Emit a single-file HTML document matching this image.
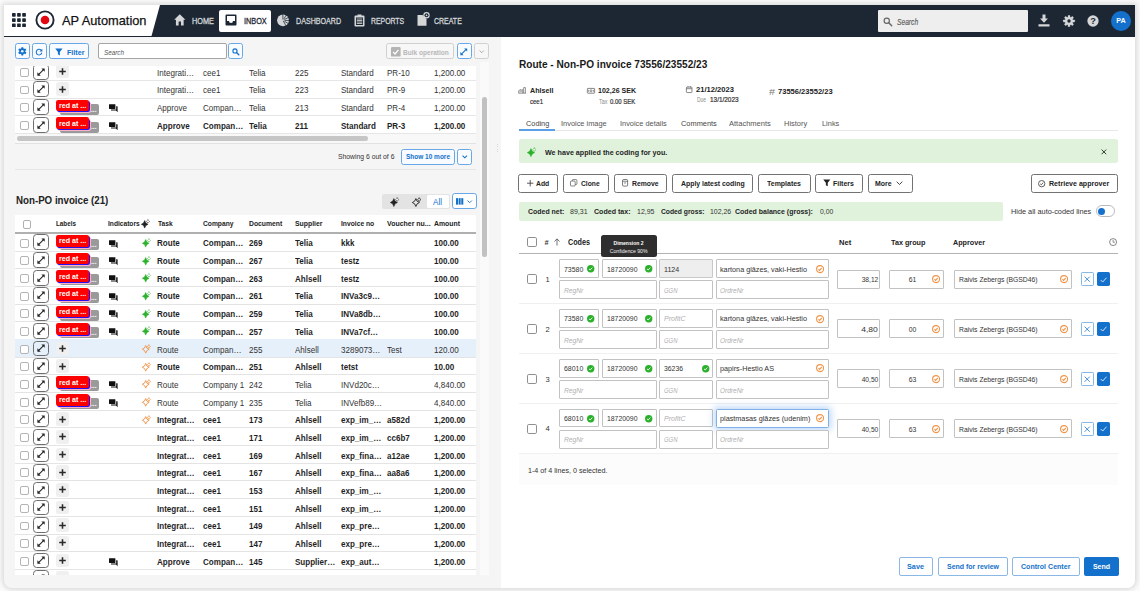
<!DOCTYPE html><html><head><meta charset="utf-8"><title>AP Automation</title><style>
*{box-sizing:border-box;margin:0;padding:0}
html,body{width:1140px;height:591px;overflow:hidden;background:#fbfbfb;font-family:"Liberation Sans",sans-serif;font-size:8.3px;color:#222}
.abs{position:absolute}
#app{position:absolute;left:4px;top:5px;width:1130.5px;height:582.6px;background:#f5f5f5;border-radius:0 0 8px 8px;box-shadow:0 0 5px 2px rgba(0,0,0,.13);overflow:hidden}
/* coordinates inside #app are page coords minus (4,5); use wrapper shifted back */
#pg{position:absolute;left:-4px;top:-5px;width:1140px;height:591px}
#nav{position:absolute;left:4px;top:5px;width:1131px;height:31.5px;background:#1c2733}
#logo{position:absolute;left:0;top:0;width:157px;height:31px;background:#fff;clip-path:polygon(0 0,156px 0,147.5px 100%,0 100%)}
.navt{position:absolute;top:16.3px;color:#dfe3e6;font-size:8.2px;letter-spacing:.1px;line-height:10px;white-space:nowrap}
.b{font-weight:bold}
svg{position:absolute;overflow:visible}
.t{position:absolute;white-space:nowrap;line-height:10px}
</style></head><body><div id="app"><div id="pg"><div id="nav"><div id="logo"></div></div><svg style="left:11.8px;top:13.2px" width="13.9" height="14.1" viewBox="0 0 13.9 14.1" ><rect x="0.0" y="0.0" width="3.7" height="3.7" rx=".7" fill="#1c2733"/><rect x="0.0" y="5.2" width="3.7" height="3.7" rx=".7" fill="#1c2733"/><rect x="0.0" y="10.4" width="3.7" height="3.7" rx=".7" fill="#1c2733"/><rect x="5.1" y="0.0" width="3.7" height="3.7" rx=".7" fill="#1c2733"/><rect x="5.1" y="5.2" width="3.7" height="3.7" rx=".7" fill="#1c2733"/><rect x="5.1" y="10.4" width="3.7" height="3.7" rx=".7" fill="#1c2733"/><rect x="10.2" y="0.0" width="3.7" height="3.7" rx=".7" fill="#1c2733"/><rect x="10.2" y="5.2" width="3.7" height="3.7" rx=".7" fill="#1c2733"/><rect x="10.2" y="10.4" width="3.7" height="3.7" rx=".7" fill="#1c2733"/></svg><svg style="left:35.2px;top:10px" width="20" height="20" viewBox="0 0 20 20" ><circle cx="10" cy="10" r="8.6" fill="#fff" stroke="#1c2733" stroke-width="1.9"/><circle cx="10" cy="10" r="4.3" fill="#e30613"/></svg><div class="t" style="top:13px;font-size:13.3px;line-height:15.96px;color:#111;left:62px;transform-origin:0 50%;transform:scaleX(0.9631);-webkit-text-stroke:.25px #111;">AP Automation</div><svg style="left:173.8px;top:14.2px" width="11.6" height="11.8" viewBox="0 0 24 22"  preserveAspectRatio="none"><path d="M12 0.5 L0.3 10.8 H4 V21.5 H9.6 V14.2 H14.4 V21.5 H20 V10.8 H23.7 Z" fill="#d4d6d8"/></svg><div class="t" style="top:16px;font-size:8.6px;line-height:10.32px;color:#d4d6d8;left:191.8px;transform-origin:0 50%;transform:scaleX(0.8527);-webkit-text-stroke:.3px currentColor;">HOME</div><div class="abs" style="left:218.5px;top:9.5px;width:52.5px;height:22.5px;background:#fff;border-radius:2px"></div><svg style="left:225.2px;top:14.1px" width="12" height="12" viewBox="0 0 24 24" ><path d="M3 1 H21 a2 2 0 0 1 2 2 V21 a2 2 0 0 1 -2 2 H3 a2 2 0 0 1 -2 -2 V3 a2 2 0 0 1 2 -2 Z M4 4 V14 H8 a4 4 0 0 0 8 0 H20 V4 Z" fill="#1c2733" fill-rule="evenodd"/></svg><div class="t" style="top:16px;font-size:8.6px;line-height:10.32px;color:#1c2733;left:243.6px;transform-origin:0 50%;transform:scaleX(0.8482);-webkit-text-stroke:.3px currentColor;">INBOX</div><svg style="left:277.4px;top:13.9px" width="12" height="12.6" viewBox="0 0 24 25.2" ><circle cx="12" cy="12.6" r="11.8" fill="#d4d6d8"/><path d="M11.96 11.40 L11.56 0.11 M13.70 9.89 L18.62 2.00 M14.83 11.10 L23.04 6.73 M15.20 12.71 L24.49 13.04 M14.71 14.30 L22.60 19.22 M12.56 13.66 L17.87 23.64 " stroke="#1c2733" stroke-width="1.5"/></svg><div class="t" style="top:16px;font-size:8.6px;line-height:10.32px;color:#d4d6d8;left:295.8px;transform-origin:0 50%;transform:scaleX(0.8297);-webkit-text-stroke:.3px currentColor;">DASHBOARD</div><svg style="left:353.5px;top:14px" width="11" height="13" viewBox="0 0 22 26" ><path d="M7 1 H15 V3 H19 a2 2 0 0 1 2 2 V23 a2 2 0 0 1 -2 2 H3 a2 2 0 0 1 -2 -2 V5 a2 2 0 0 1 2 -2 H7 Z" fill="#d4d6d8"/><rect x="4" y="7" width="14" height="15" fill="#1c2733"/><path d="M5.5 10 H16.5 M5.5 13 H16.5 M5.5 16 H16.5 M5.5 19 H16.5" stroke="#d4d6d8" stroke-width="1.7"/></svg><div class="t" style="top:16px;font-size:8.6px;line-height:10.32px;color:#d4d6d8;left:371px;transform-origin:0 50%;transform:scaleX(0.8016);-webkit-text-stroke:.3px currentColor;">REPORTS</div><svg style="left:417.2px;top:11.6px" width="13" height="14" viewBox="0 0 26 28" ><path d="M1 6 H11 L19 14 V27.5 H1 Z" fill="#d4d6d8"/><circle cx="19" cy="6.6" r="6.4" fill="#d4d6d8"/><circle cx="19" cy="6.6" r="4" fill="#1c2733"/><circle cx="19" cy="6.6" r="1.7" fill="#d4d6d8"/></svg><div class="t" style="top:16px;font-size:8.6px;line-height:10.32px;color:#d4d6d8;left:433.7px;transform-origin:0 50%;transform:scaleX(0.8118);-webkit-text-stroke:.3px currentColor;">CREATE</div><div class="abs" style="left:878.4px;top:10.2px;width:149.2px;height:21.4px;background:#eeeeee;border-radius:1px"></div><svg style="left:883.2px;top:16.6px" width="9.4" height="9.4" viewBox="0 0 20 20" ><circle cx="8" cy="8" r="5.6" fill="none" stroke="#666" stroke-width="2.5"/><path d="M12.3 12.3 L18.5 18.5" stroke="#666" stroke-width="3.1" stroke-linecap="round"/></svg><div class="t" style="top:17px;font-size:8.4px;line-height:10.08px;color:#666;font-style:italic;left:896.9px;transform-origin:0 50%;transform:scaleX(0.7966);-webkit-text-stroke:.2px #666;">Search</div><svg style="left:1038.4px;top:14.2px" width="12" height="13" viewBox="0 0 24 26" ><path d="M9 1 H15 V9 H20 L12 17.5 L4 9 H9 Z" fill="#d4d6d8"/><rect x="1" y="20.5" width="22" height="4.5" fill="#d4d6d8"/></svg><svg style="left:1062.5px;top:14.5px" width="12" height="12" viewBox="-12 -12 24 24" ><rect x="-2.3" y="-11.6" width="4.6" height="6" rx=".8" transform="rotate(0)" fill="#d4d6d8"/><rect x="-2.3" y="-11.6" width="4.6" height="6" rx=".8" transform="rotate(45)" fill="#d4d6d8"/><rect x="-2.3" y="-11.6" width="4.6" height="6" rx=".8" transform="rotate(90)" fill="#d4d6d8"/><rect x="-2.3" y="-11.6" width="4.6" height="6" rx=".8" transform="rotate(135)" fill="#d4d6d8"/><rect x="-2.3" y="-11.6" width="4.6" height="6" rx=".8" transform="rotate(180)" fill="#d4d6d8"/><rect x="-2.3" y="-11.6" width="4.6" height="6" rx=".8" transform="rotate(225)" fill="#d4d6d8"/><rect x="-2.3" y="-11.6" width="4.6" height="6" rx=".8" transform="rotate(270)" fill="#d4d6d8"/><rect x="-2.3" y="-11.6" width="4.6" height="6" rx=".8" transform="rotate(315)" fill="#d4d6d8"/><circle r="7.8" fill="#d4d6d8"/><circle r="3.4" fill="#1c2733"/></svg><svg style="left:1087px;top:14.5px" width="12" height="12" viewBox="0 0 24 24" ><circle cx="12" cy="12" r="11.3" fill="#d4d6d8"/><text x="12" y="18.6" text-anchor="middle" font-family="Liberation Sans" font-weight="bold" font-size="18.5" fill="#1c2733">?</text></svg><div class="abs" style="left:1110.6px;top:10.6px;width:20px;height:20.4px;border-radius:50%;background:#1371cb"></div><div class="t" style="top:16px;font-size:7.6px;line-height:9.12px;color:#fff;font-weight:bold;left:1115.60px;transform-origin:50% 50%;transform:scaleX(0.9506);">PA</div><div class="abs" style="left:15px;top:43.3px;width:15.2px;height:16px;background:#f8fbff;border:1px solid #6aa7e6;border-width:1.3px;border-radius:2.5px;"></div><svg style="left:18.3px;top:47.2px" width="8.6" height="8.6" viewBox="-12 -12 24 24" ><rect x="-2.9" y="-11.6" width="5.8" height="6.5" rx="1" transform="rotate(0)" fill="#1371cb"/><rect x="-2.9" y="-11.6" width="5.8" height="6.5" rx="1" transform="rotate(60)" fill="#1371cb"/><rect x="-2.9" y="-11.6" width="5.8" height="6.5" rx="1" transform="rotate(120)" fill="#1371cb"/><rect x="-2.9" y="-11.6" width="5.8" height="6.5" rx="1" transform="rotate(180)" fill="#1371cb"/><rect x="-2.9" y="-11.6" width="5.8" height="6.5" rx="1" transform="rotate(240)" fill="#1371cb"/><rect x="-2.9" y="-11.6" width="5.8" height="6.5" rx="1" transform="rotate(300)" fill="#1371cb"/><circle r="8.3" fill="#1371cb"/><circle r="3.6" fill="#eaf3fc"/></svg><div class="abs" style="left:32px;top:43.3px;width:14.6px;height:16px;background:#f8fbff;border:1px solid #6aa7e6;border-width:1.3px;border-radius:2.5px;"></div><svg style="left:35.4px;top:47.6px" width="8" height="8" viewBox="0 0 18 18" ><path d="M14.6 6.2 A6.3 6.3 0 1 0 15.3 10.5" fill="none" stroke="#1371cb" stroke-width="2.3"/><path d="M16.5 1.5 V8 H10 Z" fill="#1371cb"/></svg><div class="abs" style="left:49.3px;top:43.3px;width:39.4px;height:16px;background:#f8fbff;border:1px solid #6aa7e6;border-width:1.3px;border-radius:2.5px;"></div><svg style="left:55.4px;top:47.8px" width="7.8" height="7.8" viewBox="0 0 16 16" ><path d="M0.5 1 H15.5 L10 8 V15.5 L6 13 V8 Z" fill="#1371cb"/></svg><div class="t" style="top:48px;font-size:8px;line-height:9.6px;color:#1371cb;font-weight:bold;left:67px;transform-origin:0 50%;transform:scaleX(0.8948);">Filter</div><div class="abs" style="left:98px;top:43.4px;width:128.5px;height:16px;background:#fff;border:1px solid #a4a4a4;border-width:1.3px;border-radius:2px;"></div><div class="t" style="top:48px;font-size:7.8px;line-height:9.36px;color:#555;font-style:italic;left:104px;transform-origin:0 50%;transform:scaleX(0.8093);">Search</div><div class="abs" style="left:228.2px;top:43.3px;width:15px;height:16px;background:#f8fbff;border:1px solid #6aa7e6;border-width:1.3px;border-radius:2.5px;"></div><svg style="left:232.2px;top:47.8px" width="7.4" height="7.4" viewBox="0 0 20 20" ><circle cx="8" cy="8" r="5.6" fill="none" stroke="#1371cb" stroke-width="3"/><path d="M12.3 12.3 L18.5 18.5" stroke="#1371cb" stroke-width="3.6" stroke-linecap="round"/></svg><div class="abs" style="left:385.5px;top:43.3px;width:68.6px;height:16px;background:#f7f7f7;border:1px solid #d0d0d0;border-radius:2.5px;"></div><svg style="left:390.6px;top:46.9px" width="9.6" height="9.6" viewBox="0 0 20 20" ><rect width="20" height="20" rx="2.5" fill="#b3b3b3"/><path d="M4.5 10.5 L8.5 14.5 L15.5 6" fill="none" stroke="#fff" stroke-width="2.6"/></svg><div class="t" style="top:48px;font-size:8px;line-height:9.6px;color:#b8b8b8;font-weight:bold;left:403.2px;transform-origin:0 50%;transform:scaleX(0.8179);">Bulk operation</div><div class="abs" style="left:456.7px;top:43.3px;width:15px;height:16px;background:#f8fbff;border:1px solid #6aa7e6;border-width:1.3px;border-radius:2.5px;"></div><svg style="left:460.4px;top:47.7px" width="7.6" height="7.6" viewBox="0 0 16 16" ><path d="M3 13 L13 3" stroke="#1371cb" stroke-width="2.2"/><path d="M8.6 0.8 H15.2 V7.4 Z" fill="#1371cb"/><path d="M0.8 8.6 V15.2 H7.4 Z" fill="#1371cb"/></svg><div class="abs" style="left:474.2px;top:43.3px;width:14.4px;height:16px;background:#f7f7f7;border:1px solid #d0d0d0;border-radius:2.5px;"></div><svg style="left:478.8px;top:50.3px" width="5.4" height="3.24" viewBox="0 0 10 6" ><path d="M1 1 L5 5 L9 1" fill="none" stroke="#999" stroke-width="1.5"/></svg><div class="abs" style="left:15px;top:133.4px;width:461.3px;height:10.2px;background:#f8f8f8"></div><div class="abs" style="left:15px;top:66px;width:461.3px;height:77.6px;overflow:hidden;background:linear-gradient(#fff 0,#fff 67.4px,transparent 67.4px)"><div class="abs" style="left:-15px;top:-66px;width:600px;height:300px"><div class="abs" style="left:20.2px;top:67.99999999999999px;width:8.5px;height:8.9px;background:#fff;border:1px solid #b4b4b4;border-radius:2px;"></div><div class="abs" style="left:33.3px;top:63.79999999999999px;width:15.7px;height:15.8px;background:transparent;border:1px solid #6e6e6e;border-radius:3.6px;border-width:1.2px;"></div><svg style="left:37.2px;top:67.6px" width="8.1" height="8.1" viewBox="0 0 16 16" ><path d="M3 13 L13 3" stroke="#222" stroke-width="2.1"/><path d="M8.6 0.8 H15.2 V7.4 Z" fill="#222"/><path d="M0.8 8.6 V15.2 H7.4 Z" fill="#222"/></svg><div class="abs" style="left:56px;top:64.8px;width:13.3px;height:13.6px;background:#f0f0f0;border-radius:2.5px;"></div><svg style="left:59.1px;top:68.1px" width="7" height="7" viewBox="0 0 14 14" ><path d="M7 0.4 V13.6 M0.4 7 H13.6" stroke="#2a2a2a" stroke-width="3.1"/></svg><div class="t" style="top:69px;font-size:8.3px;line-height:9.96px;color:#333;left:157.4px;transform-origin:0 50%;transform:scaleX(0.9700);">Integrati…</div><div class="t" style="top:69px;font-size:8.3px;line-height:9.96px;color:#333;left:203.3px;transform-origin:0 50%;transform:scaleX(0.9700);">cee1</div><div class="t" style="top:69px;font-size:8.3px;line-height:9.96px;color:#333;left:249.4px;transform-origin:0 50%;transform:scaleX(0.9700);">Telia</div><div class="t" style="top:69px;font-size:8.3px;line-height:9.96px;color:#333;left:295.2px;transform-origin:0 50%;transform:scaleX(0.9700);">225</div><div class="t" style="top:69px;font-size:8.3px;line-height:9.96px;color:#333;left:341.2px;transform-origin:0 50%;transform:scaleX(0.9700);">Standard</div><div class="t" style="top:69px;font-size:8.3px;line-height:9.96px;color:#333;left:387.3px;transform-origin:0 50%;transform:scaleX(0.9700);">PR-10</div><div class="t" style="top:69px;font-size:8.3px;line-height:9.96px;color:#333;left:433.5px;transform-origin:0 50%;transform:scaleX(0.9700);">1,200.00</div><div class="abs" style="left:15px;top:80.0px;width:462px;height:0.9px;background:#e6e6e6;"></div><div class="abs" style="left:20.2px;top:85.6px;width:8.5px;height:8.9px;background:#fff;border:1px solid #b4b4b4;border-radius:2px;"></div><div class="abs" style="left:33.3px;top:81.39999999999999px;width:15.7px;height:15.8px;background:transparent;border:1px solid #6e6e6e;border-radius:3.6px;border-width:1.2px;"></div><svg style="left:37.2px;top:85.2px" width="8.1" height="8.1" viewBox="0 0 16 16" ><path d="M3 13 L13 3" stroke="#222" stroke-width="2.1"/><path d="M8.6 0.8 H15.2 V7.4 Z" fill="#222"/><path d="M0.8 8.6 V15.2 H7.4 Z" fill="#222"/></svg><div class="abs" style="left:56px;top:82.4px;width:13.3px;height:13.6px;background:#f0f0f0;border-radius:2.5px;"></div><svg style="left:59.1px;top:85.7px" width="7" height="7" viewBox="0 0 14 14" ><path d="M7 0.4 V13.6 M0.4 7 H13.6" stroke="#2a2a2a" stroke-width="3.1"/></svg><div class="t" style="top:86px;font-size:8.3px;line-height:9.96px;color:#333;left:157.4px;transform-origin:0 50%;transform:scaleX(0.9700);">Integrati…</div><div class="t" style="top:86px;font-size:8.3px;line-height:9.96px;color:#333;left:203.3px;transform-origin:0 50%;transform:scaleX(0.9700);">cee1</div><div class="t" style="top:86px;font-size:8.3px;line-height:9.96px;color:#333;left:249.4px;transform-origin:0 50%;transform:scaleX(0.9700);">Telia</div><div class="t" style="top:86px;font-size:8.3px;line-height:9.96px;color:#333;left:295.2px;transform-origin:0 50%;transform:scaleX(0.9700);">223</div><div class="t" style="top:86px;font-size:8.3px;line-height:9.96px;color:#333;left:341.2px;transform-origin:0 50%;transform:scaleX(0.9700);">Standard</div><div class="t" style="top:86px;font-size:8.3px;line-height:9.96px;color:#333;left:387.3px;transform-origin:0 50%;transform:scaleX(0.9700);">PR-9</div><div class="t" style="top:86px;font-size:8.3px;line-height:9.96px;color:#333;left:433.5px;transform-origin:0 50%;transform:scaleX(0.9700);">1,200.00</div><div class="abs" style="left:15px;top:97.60000000000001px;width:462px;height:0.9px;background:#e6e6e6;"></div><div class="abs" style="left:20.2px;top:103.39999999999999px;width:8.5px;height:8.9px;background:#fff;border:1px solid #b4b4b4;border-radius:2px;"></div><div class="abs" style="left:33.3px;top:99.19999999999999px;width:15.7px;height:15.8px;background:transparent;border:1px solid #6e6e6e;border-radius:3.6px;border-width:1.2px;"></div><svg style="left:37.2px;top:103.0px" width="8.1" height="8.1" viewBox="0 0 16 16" ><path d="M3 13 L13 3" stroke="#222" stroke-width="2.1"/><path d="M8.6 0.8 H15.2 V7.4 Z" fill="#222"/><path d="M0.8 8.6 V15.2 H7.4 Z" fill="#222"/></svg><div class="abs" style="left:60.099999999999994px;top:103.80000000000001px;width:39px;height:11px;background:#9a9a9a;border-radius:2px;"></div><div class="t" style="top:105px;font-size:7.5px;line-height:9.0px;color:#fff;font-weight:bold;left:91.4px;transform-origin:0 50%;transform:scaleX(0.8799);">...</div><div class="abs" style="left:58.0px;top:101.9px;width:33px;height:11.6px;background:#ffb0c8;border-radius:2.2px;"></div><div class="abs" style="left:57.0px;top:100.80000000000001px;width:33px;height:11.6px;background:#2a10f0;border-radius:2.2px;"></div><div class="abs" style="left:55.8px;top:99.60000000000001px;width:33px;height:11.7px;background:#ff0000;border-radius:2.2px;"></div><div class="t" style="top:101px;font-size:8px;line-height:9.6px;color:#fff;font-weight:bold;left:58.599999999999994px;transform-origin:0 50%;transform:scaleX(0.8900);">red at ...</div><svg style="left:108.8px;top:104.3px" width="8.8" height="8.36" viewBox="0 0 22 20" ><path d="M1 0 H15 a1 1 0 0 1 1 1 V11 a1 1 0 0 1 -1 1 H1 a1 1 0 0 1 -1 -1 V1 a1 1 0 0 1 1 -1 Z" fill="#111"/><path d="M18 5 H20.5 a1 1 0 0 1 1 1 V20 L17.5 16 H6 a1 1 0 0 1 -1 -1 V13.5 H18 Z" fill="#111"/></svg><div class="t" style="top:104px;font-size:8.3px;line-height:9.96px;color:#333;left:157.4px;transform-origin:0 50%;transform:scaleX(0.9700);">Approve</div><div class="t" style="top:104px;font-size:8.3px;line-height:9.96px;color:#333;left:203.3px;transform-origin:0 50%;transform:scaleX(0.9700);">Compan…</div><div class="t" style="top:104px;font-size:8.3px;line-height:9.96px;color:#333;left:249.4px;transform-origin:0 50%;transform:scaleX(0.9700);">Telia</div><div class="t" style="top:104px;font-size:8.3px;line-height:9.96px;color:#333;left:295.2px;transform-origin:0 50%;transform:scaleX(0.9700);">213</div><div class="t" style="top:104px;font-size:8.3px;line-height:9.96px;color:#333;left:341.2px;transform-origin:0 50%;transform:scaleX(0.9700);">Standard</div><div class="t" style="top:104px;font-size:8.3px;line-height:9.96px;color:#333;left:387.3px;transform-origin:0 50%;transform:scaleX(0.9700);">PR-4</div><div class="t" style="top:104px;font-size:8.3px;line-height:9.96px;color:#333;left:433.5px;transform-origin:0 50%;transform:scaleX(0.9700);">1,200.00</div><div class="abs" style="left:15px;top:115.4px;width:462px;height:0.9px;background:#e6e6e6;"></div><div class="abs" style="left:20.2px;top:121.19999999999999px;width:8.5px;height:8.9px;background:#fff;border:1px solid #b4b4b4;border-radius:2px;"></div><div class="abs" style="left:33.3px;top:116.99999999999999px;width:15.7px;height:15.8px;background:transparent;border:1px solid #6e6e6e;border-radius:3.6px;border-width:1.2px;"></div><svg style="left:37.2px;top:120.8px" width="8.1" height="8.1" viewBox="0 0 16 16" ><path d="M3 13 L13 3" stroke="#222" stroke-width="2.1"/><path d="M8.6 0.8 H15.2 V7.4 Z" fill="#222"/><path d="M0.8 8.6 V15.2 H7.4 Z" fill="#222"/></svg><div class="abs" style="left:60.099999999999994px;top:121.60000000000001px;width:39px;height:11px;background:#9a9a9a;border-radius:2px;"></div><div class="t" style="top:122px;font-size:7.5px;line-height:9.0px;color:#fff;font-weight:bold;left:91.4px;transform-origin:0 50%;transform:scaleX(0.8799);">...</div><div class="abs" style="left:58.0px;top:119.7px;width:33px;height:11.6px;background:#ffb0c8;border-radius:2.2px;"></div><div class="abs" style="left:57.0px;top:118.60000000000001px;width:33px;height:11.6px;background:#2a10f0;border-radius:2.2px;"></div><div class="abs" style="left:55.8px;top:117.4px;width:33px;height:11.7px;background:#ff0000;border-radius:2.2px;"></div><div class="t" style="top:119px;font-size:8px;line-height:9.6px;color:#fff;font-weight:bold;left:58.599999999999994px;transform-origin:0 50%;transform:scaleX(0.8900);">red at ...</div><svg style="left:108.8px;top:122.1px" width="8.8" height="8.36" viewBox="0 0 22 20" ><path d="M1 0 H15 a1 1 0 0 1 1 1 V11 a1 1 0 0 1 -1 1 H1 a1 1 0 0 1 -1 -1 V1 a1 1 0 0 1 1 -1 Z" fill="#111"/><path d="M18 5 H20.5 a1 1 0 0 1 1 1 V20 L17.5 16 H6 a1 1 0 0 1 -1 -1 V13.5 H18 Z" fill="#111"/></svg><div class="t" style="top:122px;font-size:8.3px;line-height:9.96px;color:#1f1f1f;font-weight:bold;left:157.4px;transform-origin:0 50%;transform:scaleX(0.9700);">Approve</div><div class="t" style="top:122px;font-size:8.3px;line-height:9.96px;color:#1f1f1f;font-weight:bold;left:203.3px;transform-origin:0 50%;transform:scaleX(0.9700);">Compan…</div><div class="t" style="top:122px;font-size:8.3px;line-height:9.96px;color:#1f1f1f;font-weight:bold;left:249.4px;transform-origin:0 50%;transform:scaleX(0.9700);">Telia</div><div class="t" style="top:122px;font-size:8.3px;line-height:9.96px;color:#1f1f1f;font-weight:bold;left:295.2px;transform-origin:0 50%;transform:scaleX(0.9700);">211</div><div class="t" style="top:122px;font-size:8.3px;line-height:9.96px;color:#1f1f1f;font-weight:bold;left:341.2px;transform-origin:0 50%;transform:scaleX(0.9700);">Standard</div><div class="t" style="top:122px;font-size:8.3px;line-height:9.96px;color:#1f1f1f;font-weight:bold;left:387.3px;transform-origin:0 50%;transform:scaleX(0.9700);">PR-3</div><div class="t" style="top:122px;font-size:8.3px;line-height:9.96px;color:#1f1f1f;font-weight:bold;left:433.5px;transform-origin:0 50%;transform:scaleX(0.9700);">1,200.00</div><div class="abs" style="left:15px;top:133.2px;width:462px;height:0.9px;background:#e6e6e6;"></div><div class="abs" style="left:17px;top:136.3px;width:350.5px;height:4.5px;background:#c6c6c6;border-radius:2.25px;"></div></div></div><div class="abs" style="left:15px;top:143.4px;width:461.3px;height:0.9px;background:#e2e2e2;"></div><div class="t" style="top:152px;font-size:7.7px;line-height:9.24px;color:#333;left:338.3px;transform-origin:0 50%;transform:scaleX(0.8859);">Showing 6 out of 6</div><div class="abs" style="left:401px;top:148.8px;width:54.2px;height:16px;background:#f8fbff;border:1px solid #6aa7e6;border-width:1.3px;border-radius:2.5px;"></div><div class="t" style="top:152px;font-size:7.8px;line-height:9.36px;color:#1371cb;font-weight:bold;left:406.2px;transform-origin:0 50%;transform:scaleX(0.8321);">Show 10 more</div><div class="abs" style="left:457.2px;top:148.8px;width:14.4px;height:16px;background:#f8fbff;border:1px solid #6aa7e6;border-width:1.3px;border-radius:2.5px;"></div><svg style="left:461.7px;top:155.3px" width="5.6" height="3.36" viewBox="0 0 10 6" ><path d="M1 1 L5 5 L9 1" fill="none" stroke="#1371cb" stroke-width="1.9"/></svg><div class="abs" style="left:15px;top:169.4px;width:461.3px;height:0.9px;background:#e6e6e6;"></div><div class="abs" style="left:479.5px;top:62px;width:9.5px;height:513px;background:#fafafa;"></div><div class="abs" style="left:482.3px;top:97px;width:4.6px;height:160.4px;background:#c1c1c1;border-radius:2.3px;"></div><div class="abs" style="left:496.9px;top:143.6px;width:1.1px;height:1.1px;background:#d6d6d6;"></div><div class="abs" style="left:496.9px;top:146.1px;width:1.1px;height:1.1px;background:#d6d6d6;"></div><div class="abs" style="left:496.9px;top:148.6px;width:1.1px;height:1.1px;background:#d6d6d6;"></div><div class="abs" style="left:496.9px;top:151.1px;width:1.1px;height:1.1px;background:#d6d6d6;"></div><div class="t" style="top:193px;font-size:11.6px;line-height:13.92px;color:#222;font-weight:bold;left:15.6px;transform-origin:0 50%;transform:scaleX(0.8384);">Non-PO invoice (21)</div><div class="abs" style="left:382px;top:194px;width:67.6px;height:15.2px;background:#e3e3e3;border-radius:2px;"></div><svg style="left:389.6px;top:197px" width="9.4" height="9.4" viewBox="0 0 9 9" ><path d="M3.7 1.5 Q4.312 4.616 7.1 5.3 Q4.312 5.984 3.7 9.1 Q3.088 5.984 0.30000000000000027 5.3 Q3.088 4.616 3.7 1.5 Z" fill="#222" stroke="#222" stroke-width=".55" stroke-linejoin="round"/><path d="M6.9 0.6000000000000001 Q7.380000000000001 1.9300000000000002 8.5 2.5 Q7.380000000000001 3.07 6.9 4.4 Q6.42 3.07 5.300000000000001 2.5 Q6.42 1.9300000000000002 6.9 0.6000000000000001 Z" fill="#fff" fill-opacity=".75" stroke="#222" stroke-width=".7" stroke-linejoin="round" stroke-dasharray="1.1 .7"/></svg><svg style="left:411.6px;top:196.8px" width="9.4" height="9.4" viewBox="0 0 9 9" ><path d="M3.7 1.5 Q4.312 4.616 7.1 5.3 Q4.312 5.984 3.7 9.1 Q3.088 5.984 0.30000000000000027 5.3 Q3.088 4.616 3.7 1.5 Z" fill="none" stroke="#333" stroke-width=".95" stroke-linejoin="round"/><path d="M6.9 0.6000000000000001 Q7.380000000000001 1.9300000000000002 8.5 2.5 Q7.380000000000001 3.07 6.9 4.4 Q6.42 3.07 5.300000000000001 2.5 Q6.42 1.9300000000000002 6.9 0.6000000000000001 Z" fill="none" stroke="#333" stroke-width=".8" stroke-linejoin="round"/></svg><div class="abs" style="left:427px;top:195px;width:21.6px;height:13.2px;background:#fff;border-radius:1.5px;"></div><div class="t" style="top:198px;font-size:8.2px;line-height:9.84px;color:#1371cb;left:433.24px;transform-origin:50% 50%;transform:scaleX(0.9875);">All</div><div class="abs" style="left:452px;top:193.4px;width:24.6px;height:15.8px;background:#fff;border:1px solid #6aa7e6;border-width:1.3px;border-radius:2.8px;"></div><svg style="left:455.6px;top:198.1px" width="7.3" height="6.8" viewBox="0 0 18 16" ><rect x="0" y="0" width="5" height="16" fill="#1371cb"/><rect x="6.5" y="0" width="5" height="16" fill="#1371cb"/><rect x="13" y="0" width="5" height="16" fill="#1371cb"/></svg><svg style="left:466.6px;top:199.9px" width="5.4" height="3.24" viewBox="0 0 10 6" ><path d="M1 1 L5 5 L9 1" fill="none" stroke="#1371cb" stroke-width="1.7"/></svg><div class="abs" style="left:15px;top:214.6px;width:461.3px;height:360.4px;overflow:hidden;background:#fff"><div class="abs" style="left:-15px;top:-214.6px;width:600px;height:700px"><div class="abs" style="left:22.6px;top:219.8px;width:8.7px;height:9.2px;background:#fff;border:1px solid #b0b0b0;border-radius:2px;"></div><div class="t" style="top:220px;font-size:7.3px;line-height:8.76px;color:#222;font-weight:bold;left:56px;transform-origin:0 50%;transform:scaleX(0.8649);">Labels</div><div class="t" style="top:220px;font-size:7.3px;line-height:8.76px;color:#222;font-weight:bold;left:108px;transform-origin:0 50%;transform:scaleX(0.9088);">Indicators</div><div class="t" style="top:220px;font-size:7.3px;line-height:8.76px;color:#222;font-weight:bold;left:157.5px;transform-origin:0 50%;transform:scaleX(0.9071);">Task</div><div class="t" style="top:220px;font-size:7.3px;line-height:8.76px;color:#222;font-weight:bold;left:203.3px;transform-origin:0 50%;transform:scaleX(0.9171);">Company</div><div class="t" style="top:220px;font-size:7.3px;line-height:8.76px;color:#222;font-weight:bold;left:249.4px;transform-origin:0 50%;transform:scaleX(0.9331);">Document</div><div class="t" style="top:220px;font-size:7.3px;line-height:8.76px;color:#222;font-weight:bold;left:295.2px;transform-origin:0 50%;transform:scaleX(0.9417);">Supplier</div><div class="t" style="top:220px;font-size:7.3px;line-height:8.76px;color:#222;font-weight:bold;left:341.2px;transform-origin:0 50%;transform:scaleX(0.9197);">Invoice no</div><div class="t" style="top:220px;font-size:7.3px;line-height:8.76px;color:#222;font-weight:bold;left:387.3px;transform-origin:0 50%;transform:scaleX(0.9542);">Voucher nu...</div><div class="t" style="top:220px;font-size:7.3px;line-height:8.76px;color:#222;font-weight:bold;left:433.5px;transform-origin:0 50%;transform:scaleX(0.9431);">Amount</div><svg style="left:141.3px;top:219.4px" width="9" height="9" viewBox="0 0 9 9" ><path d="M3.7 1.5 Q4.312 4.616 7.1 5.3 Q4.312 5.984 3.7 9.1 Q3.088 5.984 0.30000000000000027 5.3 Q3.088 4.616 3.7 1.5 Z" fill="#222" stroke="#222" stroke-width=".55" stroke-linejoin="round"/><path d="M6.9 0.6000000000000001 Q7.380000000000001 1.9300000000000002 8.5 2.5 Q7.380000000000001 3.07 6.9 4.4 Q6.42 3.07 5.300000000000001 2.5 Q6.42 1.9300000000000002 6.9 0.6000000000000001 Z" fill="#fff" fill-opacity=".75" stroke="#222" stroke-width=".7" stroke-linejoin="round" stroke-dasharray="1.1 .7"/></svg><div class="abs" style="left:15px;top:232px;width:462px;height:2px;background:#b0b0b0;"></div><div class="abs" style="left:20.2px;top:238.65px;width:8.5px;height:8.9px;background:#fff;border:1px solid #b4b4b4;border-radius:2px;"></div><div class="abs" style="left:33.3px;top:234.45px;width:15.7px;height:15.8px;background:transparent;border:1px solid #6e6e6e;border-radius:3.6px;border-width:1.2px;"></div><svg style="left:37.2px;top:238.25px" width="8.1" height="8.1" viewBox="0 0 16 16" ><path d="M3 13 L13 3" stroke="#222" stroke-width="2.1"/><path d="M8.6 0.8 H15.2 V7.4 Z" fill="#222"/><path d="M0.8 8.6 V15.2 H7.4 Z" fill="#222"/></svg><div class="abs" style="left:60.099999999999994px;top:239.04999999999998px;width:39px;height:11px;background:#9a9a9a;border-radius:2px;"></div><div class="t" style="top:240px;font-size:7.5px;line-height:9.0px;color:#fff;font-weight:bold;left:91.4px;transform-origin:0 50%;transform:scaleX(0.8799);">...</div><div class="abs" style="left:58.0px;top:237.15px;width:33px;height:11.6px;background:#ffb0c8;border-radius:2.2px;"></div><div class="abs" style="left:57.0px;top:236.04999999999998px;width:33px;height:11.6px;background:#2a10f0;border-radius:2.2px;"></div><div class="abs" style="left:55.8px;top:234.85px;width:33px;height:11.7px;background:#ff0000;border-radius:2.2px;"></div><div class="t" style="top:236px;font-size:8px;line-height:9.6px;color:#fff;font-weight:bold;left:58.599999999999994px;transform-origin:0 50%;transform:scaleX(0.8900);">red at ...</div><svg style="left:108.8px;top:239.55px" width="8.8" height="8.36" viewBox="0 0 22 20" ><path d="M1 0 H15 a1 1 0 0 1 1 1 V11 a1 1 0 0 1 -1 1 H1 a1 1 0 0 1 -1 -1 V1 a1 1 0 0 1 1 -1 Z" fill="#111"/><path d="M18 5 H20.5 a1 1 0 0 1 1 1 V20 L17.5 16 H6 a1 1 0 0 1 -1 -1 V13.5 H18 Z" fill="#111"/></svg><svg style="left:141.5px;top:237.95px" width="9" height="9" viewBox="0 0 9 9" ><path d="M3.7 1.5 Q4.312 4.616 7.1 5.3 Q4.312 5.984 3.7 9.1 Q3.088 5.984 0.30000000000000027 5.3 Q3.088 4.616 3.7 1.5 Z" fill="#2bb12b" stroke="#2bb12b" stroke-width=".55" stroke-linejoin="round"/><path d="M6.9 0.6000000000000001 Q7.380000000000001 1.9300000000000002 8.5 2.5 Q7.380000000000001 3.07 6.9 4.4 Q6.42 3.07 5.300000000000001 2.5 Q6.42 1.9300000000000002 6.9 0.6000000000000001 Z" fill="#fff" fill-opacity=".75" stroke="#2bb12b" stroke-width=".7" stroke-linejoin="round" stroke-dasharray="1.1 .7"/></svg><div class="t" style="top:239px;font-size:8.3px;line-height:9.96px;color:#1f1f1f;font-weight:bold;left:157.4px;transform-origin:0 50%;transform:scaleX(0.9700);">Route</div><div class="t" style="top:239px;font-size:8.3px;line-height:9.96px;color:#1f1f1f;font-weight:bold;left:203.3px;transform-origin:0 50%;transform:scaleX(0.9700);">Compan…</div><div class="t" style="top:239px;font-size:8.3px;line-height:9.96px;color:#1f1f1f;font-weight:bold;left:249.4px;transform-origin:0 50%;transform:scaleX(0.9700);">269</div><div class="t" style="top:239px;font-size:8.3px;line-height:9.96px;color:#1f1f1f;font-weight:bold;left:295.2px;transform-origin:0 50%;transform:scaleX(0.9700);">Telia</div><div class="t" style="top:239px;font-size:8.3px;line-height:9.96px;color:#1f1f1f;font-weight:bold;left:341.2px;transform-origin:0 50%;transform:scaleX(0.9700);">kkk</div><div class="t" style="top:239px;font-size:8.3px;line-height:9.96px;color:#1f1f1f;font-weight:bold;left:433.5px;transform-origin:0 50%;transform:scaleX(0.9700);">100.00</div><div class="abs" style="left:15px;top:250.65px;width:462px;height:0.9px;background:#e4e4e4;"></div><div class="abs" style="left:20.2px;top:256.33000000000004px;width:8.5px;height:8.9px;background:#fff;border:1px solid #b4b4b4;border-radius:2px;"></div><div class="abs" style="left:33.3px;top:252.13000000000002px;width:15.7px;height:15.8px;background:transparent;border:1px solid #6e6e6e;border-radius:3.6px;border-width:1.2px;"></div><svg style="left:37.2px;top:255.93000000000004px" width="8.1" height="8.1" viewBox="0 0 16 16" ><path d="M3 13 L13 3" stroke="#222" stroke-width="2.1"/><path d="M8.6 0.8 H15.2 V7.4 Z" fill="#222"/><path d="M0.8 8.6 V15.2 H7.4 Z" fill="#222"/></svg><div class="abs" style="left:60.099999999999994px;top:256.72999999999996px;width:39px;height:11px;background:#9a9a9a;border-radius:2px;"></div><div class="t" style="top:257px;font-size:7.5px;line-height:9.0px;color:#fff;font-weight:bold;left:91.4px;transform-origin:0 50%;transform:scaleX(0.8799);">...</div><div class="abs" style="left:58.0px;top:254.82999999999998px;width:33px;height:11.6px;background:#ffb0c8;border-radius:2.2px;"></div><div class="abs" style="left:57.0px;top:253.72999999999996px;width:33px;height:11.6px;background:#2a10f0;border-radius:2.2px;"></div><div class="abs" style="left:55.8px;top:252.52999999999997px;width:33px;height:11.7px;background:#ff0000;border-radius:2.2px;"></div><div class="t" style="top:254px;font-size:8px;line-height:9.6px;color:#fff;font-weight:bold;left:58.599999999999994px;transform-origin:0 50%;transform:scaleX(0.8900);">red at ...</div><svg style="left:108.8px;top:257.23px" width="8.8" height="8.36" viewBox="0 0 22 20" ><path d="M1 0 H15 a1 1 0 0 1 1 1 V11 a1 1 0 0 1 -1 1 H1 a1 1 0 0 1 -1 -1 V1 a1 1 0 0 1 1 -1 Z" fill="#111"/><path d="M18 5 H20.5 a1 1 0 0 1 1 1 V20 L17.5 16 H6 a1 1 0 0 1 -1 -1 V13.5 H18 Z" fill="#111"/></svg><svg style="left:141.5px;top:255.63px" width="9" height="9" viewBox="0 0 9 9" ><path d="M3.7 1.5 Q4.312 4.616 7.1 5.3 Q4.312 5.984 3.7 9.1 Q3.088 5.984 0.30000000000000027 5.3 Q3.088 4.616 3.7 1.5 Z" fill="#2bb12b" stroke="#2bb12b" stroke-width=".55" stroke-linejoin="round"/><path d="M6.9 0.6000000000000001 Q7.380000000000001 1.9300000000000002 8.5 2.5 Q7.380000000000001 3.07 6.9 4.4 Q6.42 3.07 5.300000000000001 2.5 Q6.42 1.9300000000000002 6.9 0.6000000000000001 Z" fill="#fff" fill-opacity=".75" stroke="#2bb12b" stroke-width=".7" stroke-linejoin="round" stroke-dasharray="1.1 .7"/></svg><div class="t" style="top:257px;font-size:8.3px;line-height:9.96px;color:#1f1f1f;font-weight:bold;left:157.4px;transform-origin:0 50%;transform:scaleX(0.9700);">Route</div><div class="t" style="top:257px;font-size:8.3px;line-height:9.96px;color:#1f1f1f;font-weight:bold;left:203.3px;transform-origin:0 50%;transform:scaleX(0.9700);">Compan…</div><div class="t" style="top:257px;font-size:8.3px;line-height:9.96px;color:#1f1f1f;font-weight:bold;left:249.4px;transform-origin:0 50%;transform:scaleX(0.9700);">267</div><div class="t" style="top:257px;font-size:8.3px;line-height:9.96px;color:#1f1f1f;font-weight:bold;left:295.2px;transform-origin:0 50%;transform:scaleX(0.9700);">Telia</div><div class="t" style="top:257px;font-size:8.3px;line-height:9.96px;color:#1f1f1f;font-weight:bold;left:341.2px;transform-origin:0 50%;transform:scaleX(0.9700);">testz</div><div class="t" style="top:257px;font-size:8.3px;line-height:9.96px;color:#1f1f1f;font-weight:bold;left:433.5px;transform-origin:0 50%;transform:scaleX(0.9700);">100.00</div><div class="abs" style="left:15px;top:268.33000000000004px;width:462px;height:0.9px;background:#e4e4e4;"></div><div class="abs" style="left:20.2px;top:274.01000000000005px;width:8.5px;height:8.9px;background:#fff;border:1px solid #b4b4b4;border-radius:2px;"></div><div class="abs" style="left:33.3px;top:269.81000000000006px;width:15.7px;height:15.8px;background:transparent;border:1px solid #6e6e6e;border-radius:3.6px;border-width:1.2px;"></div><svg style="left:37.2px;top:273.61px" width="8.1" height="8.1" viewBox="0 0 16 16" ><path d="M3 13 L13 3" stroke="#222" stroke-width="2.1"/><path d="M8.6 0.8 H15.2 V7.4 Z" fill="#222"/><path d="M0.8 8.6 V15.2 H7.4 Z" fill="#222"/></svg><div class="abs" style="left:60.099999999999994px;top:274.40999999999997px;width:39px;height:11px;background:#9a9a9a;border-radius:2px;"></div><div class="t" style="top:275px;font-size:7.5px;line-height:9.0px;color:#fff;font-weight:bold;left:91.4px;transform-origin:0 50%;transform:scaleX(0.8799);">...</div><div class="abs" style="left:58.0px;top:272.51px;width:33px;height:11.6px;background:#ffb0c8;border-radius:2.2px;"></div><div class="abs" style="left:57.0px;top:271.40999999999997px;width:33px;height:11.6px;background:#2a10f0;border-radius:2.2px;"></div><div class="abs" style="left:55.8px;top:270.21px;width:33px;height:11.7px;background:#ff0000;border-radius:2.2px;"></div><div class="t" style="top:272px;font-size:8px;line-height:9.6px;color:#fff;font-weight:bold;left:58.599999999999994px;transform-origin:0 50%;transform:scaleX(0.8900);">red at ...</div><svg style="left:108.8px;top:274.91px" width="8.8" height="8.36" viewBox="0 0 22 20" ><path d="M1 0 H15 a1 1 0 0 1 1 1 V11 a1 1 0 0 1 -1 1 H1 a1 1 0 0 1 -1 -1 V1 a1 1 0 0 1 1 -1 Z" fill="#111"/><path d="M18 5 H20.5 a1 1 0 0 1 1 1 V20 L17.5 16 H6 a1 1 0 0 1 -1 -1 V13.5 H18 Z" fill="#111"/></svg><svg style="left:141.5px;top:273.31px" width="9" height="9" viewBox="0 0 9 9" ><path d="M3.7 1.5 Q4.312 4.616 7.1 5.3 Q4.312 5.984 3.7 9.1 Q3.088 5.984 0.30000000000000027 5.3 Q3.088 4.616 3.7 1.5 Z" fill="#2bb12b" stroke="#2bb12b" stroke-width=".55" stroke-linejoin="round"/><path d="M6.9 0.6000000000000001 Q7.380000000000001 1.9300000000000002 8.5 2.5 Q7.380000000000001 3.07 6.9 4.4 Q6.42 3.07 5.300000000000001 2.5 Q6.42 1.9300000000000002 6.9 0.6000000000000001 Z" fill="#fff" fill-opacity=".75" stroke="#2bb12b" stroke-width=".7" stroke-linejoin="round" stroke-dasharray="1.1 .7"/></svg><div class="t" style="top:275px;font-size:8.3px;line-height:9.96px;color:#1f1f1f;font-weight:bold;left:157.4px;transform-origin:0 50%;transform:scaleX(0.9700);">Route</div><div class="t" style="top:275px;font-size:8.3px;line-height:9.96px;color:#1f1f1f;font-weight:bold;left:203.3px;transform-origin:0 50%;transform:scaleX(0.9700);">Compan…</div><div class="t" style="top:275px;font-size:8.3px;line-height:9.96px;color:#1f1f1f;font-weight:bold;left:249.4px;transform-origin:0 50%;transform:scaleX(0.9700);">263</div><div class="t" style="top:275px;font-size:8.3px;line-height:9.96px;color:#1f1f1f;font-weight:bold;left:295.2px;transform-origin:0 50%;transform:scaleX(0.9700);">Ahlsell</div><div class="t" style="top:275px;font-size:8.3px;line-height:9.96px;color:#1f1f1f;font-weight:bold;left:341.2px;transform-origin:0 50%;transform:scaleX(0.9700);">testz</div><div class="t" style="top:275px;font-size:8.3px;line-height:9.96px;color:#1f1f1f;font-weight:bold;left:433.5px;transform-origin:0 50%;transform:scaleX(0.9700);">100.00</div><div class="abs" style="left:15px;top:286.01px;width:462px;height:0.9px;background:#e4e4e4;"></div><div class="abs" style="left:20.2px;top:291.69000000000005px;width:8.5px;height:8.9px;background:#fff;border:1px solid #b4b4b4;border-radius:2px;"></div><div class="abs" style="left:33.3px;top:287.49000000000007px;width:15.7px;height:15.8px;background:transparent;border:1px solid #6e6e6e;border-radius:3.6px;border-width:1.2px;"></div><svg style="left:37.2px;top:291.29px" width="8.1" height="8.1" viewBox="0 0 16 16" ><path d="M3 13 L13 3" stroke="#222" stroke-width="2.1"/><path d="M8.6 0.8 H15.2 V7.4 Z" fill="#222"/><path d="M0.8 8.6 V15.2 H7.4 Z" fill="#222"/></svg><div class="abs" style="left:60.099999999999994px;top:292.09px;width:39px;height:11px;background:#9a9a9a;border-radius:2px;"></div><div class="t" style="top:293px;font-size:7.5px;line-height:9.0px;color:#fff;font-weight:bold;left:91.4px;transform-origin:0 50%;transform:scaleX(0.8799);">...</div><div class="abs" style="left:58.0px;top:290.19px;width:33px;height:11.6px;background:#ffb0c8;border-radius:2.2px;"></div><div class="abs" style="left:57.0px;top:289.09px;width:33px;height:11.6px;background:#2a10f0;border-radius:2.2px;"></div><div class="abs" style="left:55.8px;top:287.89px;width:33px;height:11.7px;background:#ff0000;border-radius:2.2px;"></div><div class="t" style="top:289px;font-size:8px;line-height:9.6px;color:#fff;font-weight:bold;left:58.599999999999994px;transform-origin:0 50%;transform:scaleX(0.8900);">red at ...</div><svg style="left:108.8px;top:292.59000000000003px" width="8.8" height="8.36" viewBox="0 0 22 20" ><path d="M1 0 H15 a1 1 0 0 1 1 1 V11 a1 1 0 0 1 -1 1 H1 a1 1 0 0 1 -1 -1 V1 a1 1 0 0 1 1 -1 Z" fill="#111"/><path d="M18 5 H20.5 a1 1 0 0 1 1 1 V20 L17.5 16 H6 a1 1 0 0 1 -1 -1 V13.5 H18 Z" fill="#111"/></svg><svg style="left:141.5px;top:290.99px" width="9" height="9" viewBox="0 0 9 9" ><path d="M3.7 1.5 Q4.312 4.616 7.1 5.3 Q4.312 5.984 3.7 9.1 Q3.088 5.984 0.30000000000000027 5.3 Q3.088 4.616 3.7 1.5 Z" fill="#2bb12b" stroke="#2bb12b" stroke-width=".55" stroke-linejoin="round"/><path d="M6.9 0.6000000000000001 Q7.380000000000001 1.9300000000000002 8.5 2.5 Q7.380000000000001 3.07 6.9 4.4 Q6.42 3.07 5.300000000000001 2.5 Q6.42 1.9300000000000002 6.9 0.6000000000000001 Z" fill="#fff" fill-opacity=".75" stroke="#2bb12b" stroke-width=".7" stroke-linejoin="round" stroke-dasharray="1.1 .7"/></svg><div class="t" style="top:292px;font-size:8.3px;line-height:9.96px;color:#1f1f1f;font-weight:bold;left:157.4px;transform-origin:0 50%;transform:scaleX(0.9700);">Route</div><div class="t" style="top:292px;font-size:8.3px;line-height:9.96px;color:#1f1f1f;font-weight:bold;left:203.3px;transform-origin:0 50%;transform:scaleX(0.9700);">Compan…</div><div class="t" style="top:292px;font-size:8.3px;line-height:9.96px;color:#1f1f1f;font-weight:bold;left:249.4px;transform-origin:0 50%;transform:scaleX(0.9700);">261</div><div class="t" style="top:292px;font-size:8.3px;line-height:9.96px;color:#1f1f1f;font-weight:bold;left:295.2px;transform-origin:0 50%;transform:scaleX(0.9700);">Telia</div><div class="t" style="top:292px;font-size:8.3px;line-height:9.96px;color:#1f1f1f;font-weight:bold;left:341.2px;transform-origin:0 50%;transform:scaleX(0.9700);">INVa3c9…</div><div class="t" style="top:292px;font-size:8.3px;line-height:9.96px;color:#1f1f1f;font-weight:bold;left:433.5px;transform-origin:0 50%;transform:scaleX(0.9700);">100.00</div><div class="abs" style="left:15px;top:303.69px;width:462px;height:0.9px;background:#e4e4e4;"></div><div class="abs" style="left:20.2px;top:309.37000000000006px;width:8.5px;height:8.9px;background:#fff;border:1px solid #b4b4b4;border-radius:2px;"></div><div class="abs" style="left:33.3px;top:305.1700000000001px;width:15.7px;height:15.8px;background:transparent;border:1px solid #6e6e6e;border-radius:3.6px;border-width:1.2px;"></div><svg style="left:37.2px;top:308.97px" width="8.1" height="8.1" viewBox="0 0 16 16" ><path d="M3 13 L13 3" stroke="#222" stroke-width="2.1"/><path d="M8.6 0.8 H15.2 V7.4 Z" fill="#222"/><path d="M0.8 8.6 V15.2 H7.4 Z" fill="#222"/></svg><div class="abs" style="left:60.099999999999994px;top:309.77px;width:39px;height:11px;background:#9a9a9a;border-radius:2px;"></div><div class="t" style="top:310px;font-size:7.5px;line-height:9.0px;color:#fff;font-weight:bold;left:91.4px;transform-origin:0 50%;transform:scaleX(0.8799);">...</div><div class="abs" style="left:58.0px;top:307.87px;width:33px;height:11.6px;background:#ffb0c8;border-radius:2.2px;"></div><div class="abs" style="left:57.0px;top:306.77px;width:33px;height:11.6px;background:#2a10f0;border-radius:2.2px;"></div><div class="abs" style="left:55.8px;top:305.57px;width:33px;height:11.7px;background:#ff0000;border-radius:2.2px;"></div><div class="t" style="top:307px;font-size:8px;line-height:9.6px;color:#fff;font-weight:bold;left:58.599999999999994px;transform-origin:0 50%;transform:scaleX(0.8900);">red at ...</div><svg style="left:108.8px;top:310.27000000000004px" width="8.8" height="8.36" viewBox="0 0 22 20" ><path d="M1 0 H15 a1 1 0 0 1 1 1 V11 a1 1 0 0 1 -1 1 H1 a1 1 0 0 1 -1 -1 V1 a1 1 0 0 1 1 -1 Z" fill="#111"/><path d="M18 5 H20.5 a1 1 0 0 1 1 1 V20 L17.5 16 H6 a1 1 0 0 1 -1 -1 V13.5 H18 Z" fill="#111"/></svg><svg style="left:141.5px;top:308.67px" width="9" height="9" viewBox="0 0 9 9" ><path d="M3.7 1.5 Q4.312 4.616 7.1 5.3 Q4.312 5.984 3.7 9.1 Q3.088 5.984 0.30000000000000027 5.3 Q3.088 4.616 3.7 1.5 Z" fill="#2bb12b" stroke="#2bb12b" stroke-width=".55" stroke-linejoin="round"/><path d="M6.9 0.6000000000000001 Q7.380000000000001 1.9300000000000002 8.5 2.5 Q7.380000000000001 3.07 6.9 4.4 Q6.42 3.07 5.300000000000001 2.5 Q6.42 1.9300000000000002 6.9 0.6000000000000001 Z" fill="#fff" fill-opacity=".75" stroke="#2bb12b" stroke-width=".7" stroke-linejoin="round" stroke-dasharray="1.1 .7"/></svg><div class="t" style="top:310px;font-size:8.3px;line-height:9.96px;color:#1f1f1f;font-weight:bold;left:157.4px;transform-origin:0 50%;transform:scaleX(0.9700);">Route</div><div class="t" style="top:310px;font-size:8.3px;line-height:9.96px;color:#1f1f1f;font-weight:bold;left:203.3px;transform-origin:0 50%;transform:scaleX(0.9700);">Compan…</div><div class="t" style="top:310px;font-size:8.3px;line-height:9.96px;color:#1f1f1f;font-weight:bold;left:249.4px;transform-origin:0 50%;transform:scaleX(0.9700);">259</div><div class="t" style="top:310px;font-size:8.3px;line-height:9.96px;color:#1f1f1f;font-weight:bold;left:295.2px;transform-origin:0 50%;transform:scaleX(0.9700);">Telia</div><div class="t" style="top:310px;font-size:8.3px;line-height:9.96px;color:#1f1f1f;font-weight:bold;left:341.2px;transform-origin:0 50%;transform:scaleX(0.9700);">INVa8db…</div><div class="t" style="top:310px;font-size:8.3px;line-height:9.96px;color:#1f1f1f;font-weight:bold;left:433.5px;transform-origin:0 50%;transform:scaleX(0.9700);">100.00</div><div class="abs" style="left:15px;top:321.37px;width:462px;height:0.9px;background:#e4e4e4;"></div><div class="abs" style="left:20.2px;top:327.05000000000007px;width:8.5px;height:8.9px;background:#fff;border:1px solid #b4b4b4;border-radius:2px;"></div><div class="abs" style="left:33.3px;top:322.8500000000001px;width:15.7px;height:15.8px;background:transparent;border:1px solid #6e6e6e;border-radius:3.6px;border-width:1.2px;"></div><svg style="left:37.2px;top:326.65000000000003px" width="8.1" height="8.1" viewBox="0 0 16 16" ><path d="M3 13 L13 3" stroke="#222" stroke-width="2.1"/><path d="M8.6 0.8 H15.2 V7.4 Z" fill="#222"/><path d="M0.8 8.6 V15.2 H7.4 Z" fill="#222"/></svg><div class="abs" style="left:60.099999999999994px;top:327.45px;width:39px;height:11px;background:#9a9a9a;border-radius:2px;"></div><div class="t" style="top:328px;font-size:7.5px;line-height:9.0px;color:#fff;font-weight:bold;left:91.4px;transform-origin:0 50%;transform:scaleX(0.8799);">...</div><div class="abs" style="left:58.0px;top:325.55px;width:33px;height:11.6px;background:#ffb0c8;border-radius:2.2px;"></div><div class="abs" style="left:57.0px;top:324.45px;width:33px;height:11.6px;background:#2a10f0;border-radius:2.2px;"></div><div class="abs" style="left:55.8px;top:323.25px;width:33px;height:11.7px;background:#ff0000;border-radius:2.2px;"></div><div class="t" style="top:325px;font-size:8px;line-height:9.6px;color:#fff;font-weight:bold;left:58.599999999999994px;transform-origin:0 50%;transform:scaleX(0.8900);">red at ...</div><svg style="left:108.8px;top:327.95000000000005px" width="8.8" height="8.36" viewBox="0 0 22 20" ><path d="M1 0 H15 a1 1 0 0 1 1 1 V11 a1 1 0 0 1 -1 1 H1 a1 1 0 0 1 -1 -1 V1 a1 1 0 0 1 1 -1 Z" fill="#111"/><path d="M18 5 H20.5 a1 1 0 0 1 1 1 V20 L17.5 16 H6 a1 1 0 0 1 -1 -1 V13.5 H18 Z" fill="#111"/></svg><svg style="left:141.5px;top:326.35px" width="9" height="9" viewBox="0 0 9 9" ><path d="M3.7 1.5 Q4.312 4.616 7.1 5.3 Q4.312 5.984 3.7 9.1 Q3.088 5.984 0.30000000000000027 5.3 Q3.088 4.616 3.7 1.5 Z" fill="#2bb12b" stroke="#2bb12b" stroke-width=".55" stroke-linejoin="round"/><path d="M6.9 0.6000000000000001 Q7.380000000000001 1.9300000000000002 8.5 2.5 Q7.380000000000001 3.07 6.9 4.4 Q6.42 3.07 5.300000000000001 2.5 Q6.42 1.9300000000000002 6.9 0.6000000000000001 Z" fill="#fff" fill-opacity=".75" stroke="#2bb12b" stroke-width=".7" stroke-linejoin="round" stroke-dasharray="1.1 .7"/></svg><div class="t" style="top:328px;font-size:8.3px;line-height:9.96px;color:#1f1f1f;font-weight:bold;left:157.4px;transform-origin:0 50%;transform:scaleX(0.9700);">Route</div><div class="t" style="top:328px;font-size:8.3px;line-height:9.96px;color:#1f1f1f;font-weight:bold;left:203.3px;transform-origin:0 50%;transform:scaleX(0.9700);">Compan…</div><div class="t" style="top:328px;font-size:8.3px;line-height:9.96px;color:#1f1f1f;font-weight:bold;left:249.4px;transform-origin:0 50%;transform:scaleX(0.9700);">257</div><div class="t" style="top:328px;font-size:8.3px;line-height:9.96px;color:#1f1f1f;font-weight:bold;left:295.2px;transform-origin:0 50%;transform:scaleX(0.9700);">Telia</div><div class="t" style="top:328px;font-size:8.3px;line-height:9.96px;color:#1f1f1f;font-weight:bold;left:341.2px;transform-origin:0 50%;transform:scaleX(0.9700);">INVa7cf…</div><div class="t" style="top:328px;font-size:8.3px;line-height:9.96px;color:#1f1f1f;font-weight:bold;left:433.5px;transform-origin:0 50%;transform:scaleX(0.9700);">100.00</div><div class="abs" style="left:15px;top:339.05px;width:462px;height:0.9px;background:#e4e4e4;"></div><div class="abs" style="left:15px;top:339.48px;width:462px;height:17.3px;background:#e6f0fb;"></div><div class="abs" style="left:20.2px;top:344.7300000000001px;width:8.5px;height:8.9px;background:#fff;border:1px solid #b4b4b4;border-radius:2px;"></div><div class="abs" style="left:33.3px;top:340.5300000000001px;width:15.7px;height:15.8px;background:transparent;border:1px solid #6e6e6e;border-radius:3.6px;border-width:1.2px;"></div><svg style="left:37.2px;top:344.33000000000004px" width="8.1" height="8.1" viewBox="0 0 16 16" ><path d="M3 13 L13 3" stroke="#222" stroke-width="2.1"/><path d="M8.6 0.8 H15.2 V7.4 Z" fill="#222"/><path d="M0.8 8.6 V15.2 H7.4 Z" fill="#222"/></svg><div class="abs" style="left:56px;top:341.53000000000003px;width:13.3px;height:13.6px;background:#f0f0f0;border-radius:2.5px;"></div><svg style="left:59.1px;top:344.83000000000004px" width="7" height="7" viewBox="0 0 14 14" ><path d="M7 0.4 V13.6 M0.4 7 H13.6" stroke="#2a2a2a" stroke-width="3.1"/></svg><svg style="left:141.5px;top:343.83000000000004px" width="9" height="9" viewBox="0 0 9 9" ><path d="M3.7 1.5 Q4.312 4.616 7.1 5.3 Q4.312 5.984 3.7 9.1 Q3.088 5.984 0.30000000000000027 5.3 Q3.088 4.616 3.7 1.5 Z" fill="none" stroke="#f0954a" stroke-width=".95" stroke-linejoin="round"/><path d="M6.9 0.6000000000000001 Q7.380000000000001 1.9300000000000002 8.5 2.5 Q7.380000000000001 3.07 6.9 4.4 Q6.42 3.07 5.300000000000001 2.5 Q6.42 1.9300000000000002 6.9 0.6000000000000001 Z" fill="none" stroke="#f0954a" stroke-width=".8" stroke-linejoin="round"/></svg><div class="t" style="top:346px;font-size:8.3px;line-height:9.96px;color:#333;left:157.4px;transform-origin:0 50%;transform:scaleX(0.9700);">Route</div><div class="t" style="top:346px;font-size:8.3px;line-height:9.96px;color:#333;left:203.3px;transform-origin:0 50%;transform:scaleX(0.9700);">Compan…</div><div class="t" style="top:346px;font-size:8.3px;line-height:9.96px;color:#333;left:249.4px;transform-origin:0 50%;transform:scaleX(0.9700);">255</div><div class="t" style="top:346px;font-size:8.3px;line-height:9.96px;color:#333;left:295.2px;transform-origin:0 50%;transform:scaleX(0.9700);">Ahlsell</div><div class="t" style="top:346px;font-size:8.3px;line-height:9.96px;color:#333;left:341.2px;transform-origin:0 50%;transform:scaleX(0.9700);">3289073…</div><div class="t" style="top:346px;font-size:8.3px;line-height:9.96px;color:#333;left:387.3px;transform-origin:0 50%;transform:scaleX(0.9700);">Test</div><div class="t" style="top:346px;font-size:8.3px;line-height:9.96px;color:#333;left:433.5px;transform-origin:0 50%;transform:scaleX(0.9700);">120.00</div><div class="abs" style="left:15px;top:356.73px;width:462px;height:0.9px;background:#e4e4e4;"></div><div class="abs" style="left:20.2px;top:362.41px;width:8.5px;height:8.9px;background:#fff;border:1px solid #b4b4b4;border-radius:2px;"></div><div class="abs" style="left:33.3px;top:358.21000000000004px;width:15.7px;height:15.8px;background:transparent;border:1px solid #6e6e6e;border-radius:3.6px;border-width:1.2px;"></div><svg style="left:37.2px;top:362.01px" width="8.1" height="8.1" viewBox="0 0 16 16" ><path d="M3 13 L13 3" stroke="#222" stroke-width="2.1"/><path d="M8.6 0.8 H15.2 V7.4 Z" fill="#222"/><path d="M0.8 8.6 V15.2 H7.4 Z" fill="#222"/></svg><div class="abs" style="left:56px;top:359.21px;width:13.3px;height:13.6px;background:#f0f0f0;border-radius:2.5px;"></div><svg style="left:59.1px;top:362.51px" width="7" height="7" viewBox="0 0 14 14" ><path d="M7 0.4 V13.6 M0.4 7 H13.6" stroke="#2a2a2a" stroke-width="3.1"/></svg><svg style="left:141.5px;top:361.51px" width="9" height="9" viewBox="0 0 9 9" ><path d="M3.7 1.5 Q4.312 4.616 7.1 5.3 Q4.312 5.984 3.7 9.1 Q3.088 5.984 0.30000000000000027 5.3 Q3.088 4.616 3.7 1.5 Z" fill="none" stroke="#f0954a" stroke-width=".95" stroke-linejoin="round"/><path d="M6.9 0.6000000000000001 Q7.380000000000001 1.9300000000000002 8.5 2.5 Q7.380000000000001 3.07 6.9 4.4 Q6.42 3.07 5.300000000000001 2.5 Q6.42 1.9300000000000002 6.9 0.6000000000000001 Z" fill="none" stroke="#f0954a" stroke-width=".8" stroke-linejoin="round"/></svg><div class="t" style="top:363px;font-size:8.3px;line-height:9.96px;color:#1f1f1f;font-weight:bold;left:157.4px;transform-origin:0 50%;transform:scaleX(0.9700);">Route</div><div class="t" style="top:363px;font-size:8.3px;line-height:9.96px;color:#1f1f1f;font-weight:bold;left:203.3px;transform-origin:0 50%;transform:scaleX(0.9700);">Compan…</div><div class="t" style="top:363px;font-size:8.3px;line-height:9.96px;color:#1f1f1f;font-weight:bold;left:249.4px;transform-origin:0 50%;transform:scaleX(0.9700);">251</div><div class="t" style="top:363px;font-size:8.3px;line-height:9.96px;color:#1f1f1f;font-weight:bold;left:295.2px;transform-origin:0 50%;transform:scaleX(0.9700);">Ahlsell</div><div class="t" style="top:363px;font-size:8.3px;line-height:9.96px;color:#1f1f1f;font-weight:bold;left:341.2px;transform-origin:0 50%;transform:scaleX(0.9700);">tetst</div><div class="t" style="top:363px;font-size:8.3px;line-height:9.96px;color:#1f1f1f;font-weight:bold;left:433.5px;transform-origin:0 50%;transform:scaleX(0.9700);">10.00</div><div class="abs" style="left:15px;top:374.40999999999997px;width:462px;height:0.9px;background:#e4e4e4;"></div><div class="abs" style="left:20.2px;top:380.0900000000001px;width:8.5px;height:8.9px;background:#fff;border:1px solid #b4b4b4;border-radius:2px;"></div><div class="abs" style="left:33.3px;top:375.8900000000001px;width:15.7px;height:15.8px;background:transparent;border:1px solid #6e6e6e;border-radius:3.6px;border-width:1.2px;"></div><svg style="left:37.2px;top:379.69000000000005px" width="8.1" height="8.1" viewBox="0 0 16 16" ><path d="M3 13 L13 3" stroke="#222" stroke-width="2.1"/><path d="M8.6 0.8 H15.2 V7.4 Z" fill="#222"/><path d="M0.8 8.6 V15.2 H7.4 Z" fill="#222"/></svg><div class="abs" style="left:60.099999999999994px;top:380.49px;width:39px;height:11px;background:#9a9a9a;border-radius:2px;"></div><div class="t" style="top:381px;font-size:7.5px;line-height:9.0px;color:#fff;font-weight:bold;left:91.4px;transform-origin:0 50%;transform:scaleX(0.8799);">...</div><div class="abs" style="left:58.0px;top:378.59000000000003px;width:33px;height:11.6px;background:#ffb0c8;border-radius:2.2px;"></div><div class="abs" style="left:57.0px;top:377.49px;width:33px;height:11.6px;background:#2a10f0;border-radius:2.2px;"></div><div class="abs" style="left:55.8px;top:376.29px;width:33px;height:11.7px;background:#ff0000;border-radius:2.2px;"></div><div class="t" style="top:378px;font-size:8px;line-height:9.6px;color:#fff;font-weight:bold;left:58.599999999999994px;transform-origin:0 50%;transform:scaleX(0.8900);">red at ...</div><svg style="left:108.8px;top:380.99000000000007px" width="8.8" height="8.36" viewBox="0 0 22 20" ><path d="M1 0 H15 a1 1 0 0 1 1 1 V11 a1 1 0 0 1 -1 1 H1 a1 1 0 0 1 -1 -1 V1 a1 1 0 0 1 1 -1 Z" fill="#111"/><path d="M18 5 H20.5 a1 1 0 0 1 1 1 V20 L17.5 16 H6 a1 1 0 0 1 -1 -1 V13.5 H18 Z" fill="#111"/></svg><svg style="left:141.5px;top:379.19000000000005px" width="9" height="9" viewBox="0 0 9 9" ><path d="M3.7 1.5 Q4.312 4.616 7.1 5.3 Q4.312 5.984 3.7 9.1 Q3.088 5.984 0.30000000000000027 5.3 Q3.088 4.616 3.7 1.5 Z" fill="none" stroke="#f0954a" stroke-width=".95" stroke-linejoin="round"/><path d="M6.9 0.6000000000000001 Q7.380000000000001 1.9300000000000002 8.5 2.5 Q7.380000000000001 3.07 6.9 4.4 Q6.42 3.07 5.300000000000001 2.5 Q6.42 1.9300000000000002 6.9 0.6000000000000001 Z" fill="none" stroke="#f0954a" stroke-width=".8" stroke-linejoin="round"/></svg><div class="t" style="top:381px;font-size:8.3px;line-height:9.96px;color:#333;left:157.4px;transform-origin:0 50%;transform:scaleX(0.9700);">Route</div><div class="t" style="top:381px;font-size:8.3px;line-height:9.96px;color:#333;left:203.3px;transform-origin:0 50%;transform:scaleX(0.9700);">Company 1</div><div class="t" style="top:381px;font-size:8.3px;line-height:9.96px;color:#333;left:249.4px;transform-origin:0 50%;transform:scaleX(0.9700);">242</div><div class="t" style="top:381px;font-size:8.3px;line-height:9.96px;color:#333;left:295.2px;transform-origin:0 50%;transform:scaleX(0.9700);">Telia</div><div class="t" style="top:381px;font-size:8.3px;line-height:9.96px;color:#333;left:341.2px;transform-origin:0 50%;transform:scaleX(0.9700);">INVd20c…</div><div class="t" style="top:381px;font-size:8.3px;line-height:9.96px;color:#333;left:433.5px;transform-origin:0 50%;transform:scaleX(0.9700);">4,840.00</div><div class="abs" style="left:15px;top:392.09000000000003px;width:462px;height:0.9px;background:#e4e4e4;"></div><div class="abs" style="left:20.2px;top:397.77000000000004px;width:8.5px;height:8.9px;background:#fff;border:1px solid #b4b4b4;border-radius:2px;"></div><div class="abs" style="left:33.3px;top:393.57000000000005px;width:15.7px;height:15.8px;background:transparent;border:1px solid #6e6e6e;border-radius:3.6px;border-width:1.2px;"></div><svg style="left:37.2px;top:397.37px" width="8.1" height="8.1" viewBox="0 0 16 16" ><path d="M3 13 L13 3" stroke="#222" stroke-width="2.1"/><path d="M8.6 0.8 H15.2 V7.4 Z" fill="#222"/><path d="M0.8 8.6 V15.2 H7.4 Z" fill="#222"/></svg><div class="abs" style="left:60.099999999999994px;top:398.16999999999996px;width:39px;height:11px;background:#9a9a9a;border-radius:2px;"></div><div class="t" style="top:399px;font-size:7.5px;line-height:9.0px;color:#fff;font-weight:bold;left:91.4px;transform-origin:0 50%;transform:scaleX(0.8799);">...</div><div class="abs" style="left:58.0px;top:396.27px;width:33px;height:11.6px;background:#ffb0c8;border-radius:2.2px;"></div><div class="abs" style="left:57.0px;top:395.16999999999996px;width:33px;height:11.6px;background:#2a10f0;border-radius:2.2px;"></div><div class="abs" style="left:55.8px;top:393.96999999999997px;width:33px;height:11.7px;background:#ff0000;border-radius:2.2px;"></div><div class="t" style="top:395px;font-size:8px;line-height:9.6px;color:#fff;font-weight:bold;left:58.599999999999994px;transform-origin:0 50%;transform:scaleX(0.8900);">red at ...</div><svg style="left:108.8px;top:398.67px" width="8.8" height="8.36" viewBox="0 0 22 20" ><path d="M1 0 H15 a1 1 0 0 1 1 1 V11 a1 1 0 0 1 -1 1 H1 a1 1 0 0 1 -1 -1 V1 a1 1 0 0 1 1 -1 Z" fill="#111"/><path d="M18 5 H20.5 a1 1 0 0 1 1 1 V20 L17.5 16 H6 a1 1 0 0 1 -1 -1 V13.5 H18 Z" fill="#111"/></svg><svg style="left:141.5px;top:396.87px" width="9" height="9" viewBox="0 0 9 9" ><path d="M3.7 1.5 Q4.312 4.616 7.1 5.3 Q4.312 5.984 3.7 9.1 Q3.088 5.984 0.30000000000000027 5.3 Q3.088 4.616 3.7 1.5 Z" fill="none" stroke="#f0954a" stroke-width=".95" stroke-linejoin="round"/><path d="M6.9 0.6000000000000001 Q7.380000000000001 1.9300000000000002 8.5 2.5 Q7.380000000000001 3.07 6.9 4.4 Q6.42 3.07 5.300000000000001 2.5 Q6.42 1.9300000000000002 6.9 0.6000000000000001 Z" fill="none" stroke="#f0954a" stroke-width=".8" stroke-linejoin="round"/></svg><div class="t" style="top:399px;font-size:8.3px;line-height:9.96px;color:#333;left:157.4px;transform-origin:0 50%;transform:scaleX(0.9700);">Route</div><div class="t" style="top:399px;font-size:8.3px;line-height:9.96px;color:#333;left:203.3px;transform-origin:0 50%;transform:scaleX(0.9700);">Company 1</div><div class="t" style="top:399px;font-size:8.3px;line-height:9.96px;color:#333;left:249.4px;transform-origin:0 50%;transform:scaleX(0.9700);">235</div><div class="t" style="top:399px;font-size:8.3px;line-height:9.96px;color:#333;left:295.2px;transform-origin:0 50%;transform:scaleX(0.9700);">Telia</div><div class="t" style="top:399px;font-size:8.3px;line-height:9.96px;color:#333;left:341.2px;transform-origin:0 50%;transform:scaleX(0.9700);">INVefb89…</div><div class="t" style="top:399px;font-size:8.3px;line-height:9.96px;color:#333;left:433.5px;transform-origin:0 50%;transform:scaleX(0.9700);">4,840.00</div><div class="abs" style="left:15px;top:409.77px;width:462px;height:0.9px;background:#e4e4e4;"></div><div class="abs" style="left:20.2px;top:415.4500000000001px;width:8.5px;height:8.9px;background:#fff;border:1px solid #b4b4b4;border-radius:2px;"></div><div class="abs" style="left:33.3px;top:411.2500000000001px;width:15.7px;height:15.8px;background:transparent;border:1px solid #6e6e6e;border-radius:3.6px;border-width:1.2px;"></div><svg style="left:37.2px;top:415.05000000000007px" width="8.1" height="8.1" viewBox="0 0 16 16" ><path d="M3 13 L13 3" stroke="#222" stroke-width="2.1"/><path d="M8.6 0.8 H15.2 V7.4 Z" fill="#222"/><path d="M0.8 8.6 V15.2 H7.4 Z" fill="#222"/></svg><div class="abs" style="left:56px;top:412.25000000000006px;width:13.3px;height:13.6px;background:#f0f0f0;border-radius:2.5px;"></div><svg style="left:59.1px;top:415.55000000000007px" width="7" height="7" viewBox="0 0 14 14" ><path d="M7 0.4 V13.6 M0.4 7 H13.6" stroke="#2a2a2a" stroke-width="3.1"/></svg><svg style="left:141.5px;top:414.55000000000007px" width="9" height="9" viewBox="0 0 9 9" ><path d="M3.7 1.5 Q4.312 4.616 7.1 5.3 Q4.312 5.984 3.7 9.1 Q3.088 5.984 0.30000000000000027 5.3 Q3.088 4.616 3.7 1.5 Z" fill="none" stroke="#f0954a" stroke-width=".95" stroke-linejoin="round"/><path d="M6.9 0.6000000000000001 Q7.380000000000001 1.9300000000000002 8.5 2.5 Q7.380000000000001 3.07 6.9 4.4 Q6.42 3.07 5.300000000000001 2.5 Q6.42 1.9300000000000002 6.9 0.6000000000000001 Z" fill="none" stroke="#f0954a" stroke-width=".8" stroke-linejoin="round"/></svg><div class="t" style="top:416px;font-size:8.3px;line-height:9.96px;color:#1f1f1f;font-weight:bold;left:157.4px;transform-origin:0 50%;transform:scaleX(0.9700);">Integrat…</div><div class="t" style="top:416px;font-size:8.3px;line-height:9.96px;color:#1f1f1f;font-weight:bold;left:203.3px;transform-origin:0 50%;transform:scaleX(0.9700);">cee1</div><div class="t" style="top:416px;font-size:8.3px;line-height:9.96px;color:#1f1f1f;font-weight:bold;left:249.4px;transform-origin:0 50%;transform:scaleX(0.9700);">173</div><div class="t" style="top:416px;font-size:8.3px;line-height:9.96px;color:#1f1f1f;font-weight:bold;left:295.2px;transform-origin:0 50%;transform:scaleX(0.9700);">Ahlsell</div><div class="t" style="top:416px;font-size:8.3px;line-height:9.96px;color:#1f1f1f;font-weight:bold;left:341.2px;transform-origin:0 50%;transform:scaleX(0.9700);">exp_im_…</div><div class="t" style="top:416px;font-size:8.3px;line-height:9.96px;color:#1f1f1f;font-weight:bold;left:387.3px;transform-origin:0 50%;transform:scaleX(0.9700);">a582d</div><div class="t" style="top:416px;font-size:8.3px;line-height:9.96px;color:#1f1f1f;font-weight:bold;left:433.5px;transform-origin:0 50%;transform:scaleX(0.9700);">1,200.00</div><div class="abs" style="left:15px;top:427.45000000000005px;width:462px;height:0.9px;background:#e4e4e4;"></div><div class="abs" style="left:20.2px;top:433.13000000000005px;width:8.5px;height:8.9px;background:#fff;border:1px solid #b4b4b4;border-radius:2px;"></div><div class="abs" style="left:33.3px;top:428.93000000000006px;width:15.7px;height:15.8px;background:transparent;border:1px solid #6e6e6e;border-radius:3.6px;border-width:1.2px;"></div><svg style="left:37.2px;top:432.73px" width="8.1" height="8.1" viewBox="0 0 16 16" ><path d="M3 13 L13 3" stroke="#222" stroke-width="2.1"/><path d="M8.6 0.8 H15.2 V7.4 Z" fill="#222"/><path d="M0.8 8.6 V15.2 H7.4 Z" fill="#222"/></svg><div class="abs" style="left:56px;top:429.93px;width:13.3px;height:13.6px;background:#f0f0f0;border-radius:2.5px;"></div><svg style="left:59.1px;top:433.23px" width="7" height="7" viewBox="0 0 14 14" ><path d="M7 0.4 V13.6 M0.4 7 H13.6" stroke="#2a2a2a" stroke-width="3.1"/></svg><div class="t" style="top:434px;font-size:8.3px;line-height:9.96px;color:#1f1f1f;font-weight:bold;left:157.4px;transform-origin:0 50%;transform:scaleX(0.9700);">Integrat…</div><div class="t" style="top:434px;font-size:8.3px;line-height:9.96px;color:#1f1f1f;font-weight:bold;left:203.3px;transform-origin:0 50%;transform:scaleX(0.9700);">cee1</div><div class="t" style="top:434px;font-size:8.3px;line-height:9.96px;color:#1f1f1f;font-weight:bold;left:249.4px;transform-origin:0 50%;transform:scaleX(0.9700);">171</div><div class="t" style="top:434px;font-size:8.3px;line-height:9.96px;color:#1f1f1f;font-weight:bold;left:295.2px;transform-origin:0 50%;transform:scaleX(0.9700);">Ahlsell</div><div class="t" style="top:434px;font-size:8.3px;line-height:9.96px;color:#1f1f1f;font-weight:bold;left:341.2px;transform-origin:0 50%;transform:scaleX(0.9700);">exp_im_…</div><div class="t" style="top:434px;font-size:8.3px;line-height:9.96px;color:#1f1f1f;font-weight:bold;left:387.3px;transform-origin:0 50%;transform:scaleX(0.9700);">cc6b7</div><div class="t" style="top:434px;font-size:8.3px;line-height:9.96px;color:#1f1f1f;font-weight:bold;left:433.5px;transform-origin:0 50%;transform:scaleX(0.9700);">1,200.00</div><div class="abs" style="left:15px;top:445.13px;width:462px;height:0.9px;background:#e4e4e4;"></div><div class="abs" style="left:20.2px;top:450.81000000000006px;width:8.5px;height:8.9px;background:#fff;border:1px solid #b4b4b4;border-radius:2px;"></div><div class="abs" style="left:33.3px;top:446.61000000000007px;width:15.7px;height:15.8px;background:transparent;border:1px solid #6e6e6e;border-radius:3.6px;border-width:1.2px;"></div><svg style="left:37.2px;top:450.41px" width="8.1" height="8.1" viewBox="0 0 16 16" ><path d="M3 13 L13 3" stroke="#222" stroke-width="2.1"/><path d="M8.6 0.8 H15.2 V7.4 Z" fill="#222"/><path d="M0.8 8.6 V15.2 H7.4 Z" fill="#222"/></svg><div class="abs" style="left:56px;top:447.61px;width:13.3px;height:13.6px;background:#f0f0f0;border-radius:2.5px;"></div><svg style="left:59.1px;top:450.91px" width="7" height="7" viewBox="0 0 14 14" ><path d="M7 0.4 V13.6 M0.4 7 H13.6" stroke="#2a2a2a" stroke-width="3.1"/></svg><div class="t" style="top:452px;font-size:8.3px;line-height:9.96px;color:#1f1f1f;font-weight:bold;left:157.4px;transform-origin:0 50%;transform:scaleX(0.9700);">Integrat…</div><div class="t" style="top:452px;font-size:8.3px;line-height:9.96px;color:#1f1f1f;font-weight:bold;left:203.3px;transform-origin:0 50%;transform:scaleX(0.9700);">cee1</div><div class="t" style="top:452px;font-size:8.3px;line-height:9.96px;color:#1f1f1f;font-weight:bold;left:249.4px;transform-origin:0 50%;transform:scaleX(0.9700);">169</div><div class="t" style="top:452px;font-size:8.3px;line-height:9.96px;color:#1f1f1f;font-weight:bold;left:295.2px;transform-origin:0 50%;transform:scaleX(0.9700);">Ahlsell</div><div class="t" style="top:452px;font-size:8.3px;line-height:9.96px;color:#1f1f1f;font-weight:bold;left:341.2px;transform-origin:0 50%;transform:scaleX(0.9700);">exp_fina…</div><div class="t" style="top:452px;font-size:8.3px;line-height:9.96px;color:#1f1f1f;font-weight:bold;left:387.3px;transform-origin:0 50%;transform:scaleX(0.9700);">a12ae</div><div class="t" style="top:452px;font-size:8.3px;line-height:9.96px;color:#1f1f1f;font-weight:bold;left:433.5px;transform-origin:0 50%;transform:scaleX(0.9700);">1,200.00</div><div class="abs" style="left:15px;top:462.81px;width:462px;height:0.9px;background:#e4e4e4;"></div><div class="abs" style="left:20.2px;top:468.49000000000007px;width:8.5px;height:8.9px;background:#fff;border:1px solid #b4b4b4;border-radius:2px;"></div><div class="abs" style="left:33.3px;top:464.2900000000001px;width:15.7px;height:15.8px;background:transparent;border:1px solid #6e6e6e;border-radius:3.6px;border-width:1.2px;"></div><svg style="left:37.2px;top:468.09000000000003px" width="8.1" height="8.1" viewBox="0 0 16 16" ><path d="M3 13 L13 3" stroke="#222" stroke-width="2.1"/><path d="M8.6 0.8 H15.2 V7.4 Z" fill="#222"/><path d="M0.8 8.6 V15.2 H7.4 Z" fill="#222"/></svg><div class="abs" style="left:56px;top:465.29px;width:13.3px;height:13.6px;background:#f0f0f0;border-radius:2.5px;"></div><svg style="left:59.1px;top:468.59000000000003px" width="7" height="7" viewBox="0 0 14 14" ><path d="M7 0.4 V13.6 M0.4 7 H13.6" stroke="#2a2a2a" stroke-width="3.1"/></svg><div class="t" style="top:469px;font-size:8.3px;line-height:9.96px;color:#1f1f1f;font-weight:bold;left:157.4px;transform-origin:0 50%;transform:scaleX(0.9700);">Integrat…</div><div class="t" style="top:469px;font-size:8.3px;line-height:9.96px;color:#1f1f1f;font-weight:bold;left:203.3px;transform-origin:0 50%;transform:scaleX(0.9700);">cee1</div><div class="t" style="top:469px;font-size:8.3px;line-height:9.96px;color:#1f1f1f;font-weight:bold;left:249.4px;transform-origin:0 50%;transform:scaleX(0.9700);">167</div><div class="t" style="top:469px;font-size:8.3px;line-height:9.96px;color:#1f1f1f;font-weight:bold;left:295.2px;transform-origin:0 50%;transform:scaleX(0.9700);">Ahlsell</div><div class="t" style="top:469px;font-size:8.3px;line-height:9.96px;color:#1f1f1f;font-weight:bold;left:341.2px;transform-origin:0 50%;transform:scaleX(0.9700);">exp_fina…</div><div class="t" style="top:469px;font-size:8.3px;line-height:9.96px;color:#1f1f1f;font-weight:bold;left:387.3px;transform-origin:0 50%;transform:scaleX(0.9700);">aa8a6</div><div class="t" style="top:469px;font-size:8.3px;line-height:9.96px;color:#1f1f1f;font-weight:bold;left:433.5px;transform-origin:0 50%;transform:scaleX(0.9700);">1,200.00</div><div class="abs" style="left:15px;top:480.49px;width:462px;height:0.9px;background:#e4e4e4;"></div><div class="abs" style="left:20.2px;top:486.17px;width:8.5px;height:8.9px;background:#fff;border:1px solid #b4b4b4;border-radius:2px;"></div><div class="abs" style="left:33.3px;top:481.97px;width:15.7px;height:15.8px;background:transparent;border:1px solid #6e6e6e;border-radius:3.6px;border-width:1.2px;"></div><svg style="left:37.2px;top:485.77px" width="8.1" height="8.1" viewBox="0 0 16 16" ><path d="M3 13 L13 3" stroke="#222" stroke-width="2.1"/><path d="M8.6 0.8 H15.2 V7.4 Z" fill="#222"/><path d="M0.8 8.6 V15.2 H7.4 Z" fill="#222"/></svg><div class="abs" style="left:56px;top:482.96999999999997px;width:13.3px;height:13.6px;background:#f0f0f0;border-radius:2.5px;"></div><svg style="left:59.1px;top:486.27px" width="7" height="7" viewBox="0 0 14 14" ><path d="M7 0.4 V13.6 M0.4 7 H13.6" stroke="#2a2a2a" stroke-width="3.1"/></svg><div class="t" style="top:487px;font-size:8.3px;line-height:9.96px;color:#1f1f1f;font-weight:bold;left:157.4px;transform-origin:0 50%;transform:scaleX(0.9700);">Integrat…</div><div class="t" style="top:487px;font-size:8.3px;line-height:9.96px;color:#1f1f1f;font-weight:bold;left:203.3px;transform-origin:0 50%;transform:scaleX(0.9700);">cee1</div><div class="t" style="top:487px;font-size:8.3px;line-height:9.96px;color:#1f1f1f;font-weight:bold;left:249.4px;transform-origin:0 50%;transform:scaleX(0.9700);">153</div><div class="t" style="top:487px;font-size:8.3px;line-height:9.96px;color:#1f1f1f;font-weight:bold;left:295.2px;transform-origin:0 50%;transform:scaleX(0.9700);">Ahlsell</div><div class="t" style="top:487px;font-size:8.3px;line-height:9.96px;color:#1f1f1f;font-weight:bold;left:341.2px;transform-origin:0 50%;transform:scaleX(0.9700);">exp_im_…</div><div class="t" style="top:487px;font-size:8.3px;line-height:9.96px;color:#1f1f1f;font-weight:bold;left:433.5px;transform-origin:0 50%;transform:scaleX(0.9700);">1,200.00</div><div class="abs" style="left:15px;top:498.16999999999996px;width:462px;height:0.9px;background:#e4e4e4;"></div><div class="abs" style="left:20.2px;top:503.8500000000001px;width:8.5px;height:8.9px;background:#fff;border:1px solid #b4b4b4;border-radius:2px;"></div><div class="abs" style="left:33.3px;top:499.6500000000001px;width:15.7px;height:15.8px;background:transparent;border:1px solid #6e6e6e;border-radius:3.6px;border-width:1.2px;"></div><svg style="left:37.2px;top:503.45000000000005px" width="8.1" height="8.1" viewBox="0 0 16 16" ><path d="M3 13 L13 3" stroke="#222" stroke-width="2.1"/><path d="M8.6 0.8 H15.2 V7.4 Z" fill="#222"/><path d="M0.8 8.6 V15.2 H7.4 Z" fill="#222"/></svg><div class="abs" style="left:56px;top:500.65000000000003px;width:13.3px;height:13.6px;background:#f0f0f0;border-radius:2.5px;"></div><svg style="left:59.1px;top:503.95000000000005px" width="7" height="7" viewBox="0 0 14 14" ><path d="M7 0.4 V13.6 M0.4 7 H13.6" stroke="#2a2a2a" stroke-width="3.1"/></svg><div class="t" style="top:505px;font-size:8.3px;line-height:9.96px;color:#1f1f1f;font-weight:bold;left:157.4px;transform-origin:0 50%;transform:scaleX(0.9700);">Integrat…</div><div class="t" style="top:505px;font-size:8.3px;line-height:9.96px;color:#1f1f1f;font-weight:bold;left:203.3px;transform-origin:0 50%;transform:scaleX(0.9700);">cee1</div><div class="t" style="top:505px;font-size:8.3px;line-height:9.96px;color:#1f1f1f;font-weight:bold;left:249.4px;transform-origin:0 50%;transform:scaleX(0.9700);">151</div><div class="t" style="top:505px;font-size:8.3px;line-height:9.96px;color:#1f1f1f;font-weight:bold;left:295.2px;transform-origin:0 50%;transform:scaleX(0.9700);">Ahlsell</div><div class="t" style="top:505px;font-size:8.3px;line-height:9.96px;color:#1f1f1f;font-weight:bold;left:341.2px;transform-origin:0 50%;transform:scaleX(0.9700);">exp_im_…</div><div class="t" style="top:505px;font-size:8.3px;line-height:9.96px;color:#1f1f1f;font-weight:bold;left:433.5px;transform-origin:0 50%;transform:scaleX(0.9700);">1,200.00</div><div class="abs" style="left:15px;top:515.85px;width:462px;height:0.9px;background:#e4e4e4;"></div><div class="abs" style="left:20.2px;top:521.53px;width:8.5px;height:8.9px;background:#fff;border:1px solid #b4b4b4;border-radius:2px;"></div><div class="abs" style="left:33.3px;top:517.33px;width:15.7px;height:15.8px;background:transparent;border:1px solid #6e6e6e;border-radius:3.6px;border-width:1.2px;"></div><svg style="left:37.2px;top:521.13px" width="8.1" height="8.1" viewBox="0 0 16 16" ><path d="M3 13 L13 3" stroke="#222" stroke-width="2.1"/><path d="M8.6 0.8 H15.2 V7.4 Z" fill="#222"/><path d="M0.8 8.6 V15.2 H7.4 Z" fill="#222"/></svg><div class="abs" style="left:56px;top:518.33px;width:13.3px;height:13.6px;background:#f0f0f0;border-radius:2.5px;"></div><svg style="left:59.1px;top:521.63px" width="7" height="7" viewBox="0 0 14 14" ><path d="M7 0.4 V13.6 M0.4 7 H13.6" stroke="#2a2a2a" stroke-width="3.1"/></svg><div class="t" style="top:522px;font-size:8.3px;line-height:9.96px;color:#1f1f1f;font-weight:bold;left:157.4px;transform-origin:0 50%;transform:scaleX(0.9700);">Integrat…</div><div class="t" style="top:522px;font-size:8.3px;line-height:9.96px;color:#1f1f1f;font-weight:bold;left:203.3px;transform-origin:0 50%;transform:scaleX(0.9700);">cee1</div><div class="t" style="top:522px;font-size:8.3px;line-height:9.96px;color:#1f1f1f;font-weight:bold;left:249.4px;transform-origin:0 50%;transform:scaleX(0.9700);">149</div><div class="t" style="top:522px;font-size:8.3px;line-height:9.96px;color:#1f1f1f;font-weight:bold;left:295.2px;transform-origin:0 50%;transform:scaleX(0.9700);">Ahlsell</div><div class="t" style="top:522px;font-size:8.3px;line-height:9.96px;color:#1f1f1f;font-weight:bold;left:341.2px;transform-origin:0 50%;transform:scaleX(0.9700);">exp_pre…</div><div class="t" style="top:522px;font-size:8.3px;line-height:9.96px;color:#1f1f1f;font-weight:bold;left:433.5px;transform-origin:0 50%;transform:scaleX(0.9700);">1,200.00</div><div class="abs" style="left:15px;top:533.53px;width:462px;height:0.9px;background:#e4e4e4;"></div><div class="abs" style="left:20.2px;top:539.21px;width:8.5px;height:8.9px;background:#fff;border:1px solid #b4b4b4;border-radius:2px;"></div><div class="abs" style="left:33.3px;top:535.0100000000001px;width:15.7px;height:15.8px;background:transparent;border:1px solid #6e6e6e;border-radius:3.6px;border-width:1.2px;"></div><svg style="left:37.2px;top:538.8100000000001px" width="8.1" height="8.1" viewBox="0 0 16 16" ><path d="M3 13 L13 3" stroke="#222" stroke-width="2.1"/><path d="M8.6 0.8 H15.2 V7.4 Z" fill="#222"/><path d="M0.8 8.6 V15.2 H7.4 Z" fill="#222"/></svg><div class="abs" style="left:56px;top:536.0100000000001px;width:13.3px;height:13.6px;background:#f0f0f0;border-radius:2.5px;"></div><svg style="left:59.1px;top:539.3100000000001px" width="7" height="7" viewBox="0 0 14 14" ><path d="M7 0.4 V13.6 M0.4 7 H13.6" stroke="#2a2a2a" stroke-width="3.1"/></svg><div class="t" style="top:540px;font-size:8.3px;line-height:9.96px;color:#1f1f1f;font-weight:bold;left:157.4px;transform-origin:0 50%;transform:scaleX(0.9700);">Integrat…</div><div class="t" style="top:540px;font-size:8.3px;line-height:9.96px;color:#1f1f1f;font-weight:bold;left:203.3px;transform-origin:0 50%;transform:scaleX(0.9700);">cee1</div><div class="t" style="top:540px;font-size:8.3px;line-height:9.96px;color:#1f1f1f;font-weight:bold;left:249.4px;transform-origin:0 50%;transform:scaleX(0.9700);">147</div><div class="t" style="top:540px;font-size:8.3px;line-height:9.96px;color:#1f1f1f;font-weight:bold;left:295.2px;transform-origin:0 50%;transform:scaleX(0.9700);">Ahlsell</div><div class="t" style="top:540px;font-size:8.3px;line-height:9.96px;color:#1f1f1f;font-weight:bold;left:341.2px;transform-origin:0 50%;transform:scaleX(0.9700);">exp_pre…</div><div class="t" style="top:540px;font-size:8.3px;line-height:9.96px;color:#1f1f1f;font-weight:bold;left:433.5px;transform-origin:0 50%;transform:scaleX(0.9700);">1,200.00</div><div class="abs" style="left:15px;top:551.21px;width:462px;height:0.9px;background:#e4e4e4;"></div><div class="abs" style="left:20.2px;top:556.89px;width:8.5px;height:8.9px;background:#fff;border:1px solid #b4b4b4;border-radius:2px;"></div><div class="abs" style="left:33.3px;top:552.69px;width:15.7px;height:15.8px;background:transparent;border:1px solid #6e6e6e;border-radius:3.6px;border-width:1.2px;"></div><svg style="left:37.2px;top:556.49px" width="8.1" height="8.1" viewBox="0 0 16 16" ><path d="M3 13 L13 3" stroke="#222" stroke-width="2.1"/><path d="M8.6 0.8 H15.2 V7.4 Z" fill="#222"/><path d="M0.8 8.6 V15.2 H7.4 Z" fill="#222"/></svg><div class="abs" style="left:56px;top:553.69px;width:13.3px;height:13.6px;background:#f0f0f0;border-radius:2.5px;"></div><svg style="left:59.1px;top:556.99px" width="7" height="7" viewBox="0 0 14 14" ><path d="M7 0.4 V13.6 M0.4 7 H13.6" stroke="#2a2a2a" stroke-width="3.1"/></svg><svg style="left:108.8px;top:557.79px" width="8.8" height="8.36" viewBox="0 0 22 20" ><path d="M1 0 H15 a1 1 0 0 1 1 1 V11 a1 1 0 0 1 -1 1 H1 a1 1 0 0 1 -1 -1 V1 a1 1 0 0 1 1 -1 Z" fill="#111"/><path d="M18 5 H20.5 a1 1 0 0 1 1 1 V20 L17.5 16 H6 a1 1 0 0 1 -1 -1 V13.5 H18 Z" fill="#111"/></svg><div class="t" style="top:558px;font-size:8.3px;line-height:9.96px;color:#1f1f1f;font-weight:bold;left:157.4px;transform-origin:0 50%;transform:scaleX(0.9700);">Approve</div><div class="t" style="top:558px;font-size:8.3px;line-height:9.96px;color:#1f1f1f;font-weight:bold;left:203.3px;transform-origin:0 50%;transform:scaleX(0.9700);">Compan…</div><div class="t" style="top:558px;font-size:8.3px;line-height:9.96px;color:#1f1f1f;font-weight:bold;left:249.4px;transform-origin:0 50%;transform:scaleX(0.9700);">145</div><div class="t" style="top:558px;font-size:8.3px;line-height:9.96px;color:#1f1f1f;font-weight:bold;left:295.2px;transform-origin:0 50%;transform:scaleX(0.9700);">Supplier…</div><div class="t" style="top:558px;font-size:8.3px;line-height:9.96px;color:#1f1f1f;font-weight:bold;left:341.2px;transform-origin:0 50%;transform:scaleX(0.9700);">exp_aut…</div><div class="t" style="top:558px;font-size:8.3px;line-height:9.96px;color:#1f1f1f;font-weight:bold;left:433.5px;transform-origin:0 50%;transform:scaleX(0.9700);">1,200.00</div><div class="abs" style="left:15px;top:568.89px;width:462px;height:0.9px;background:#e4e4e4;"></div><div class="abs" style="left:20.2px;top:574.57px;width:8.5px;height:8.9px;background:#fff;border:1px solid #b4b4b4;border-radius:2px;"></div><div class="abs" style="left:33.3px;top:570.3700000000001px;width:15.7px;height:15.8px;background:transparent;border:1px solid #6e6e6e;border-radius:3.6px;border-width:1.2px;"></div><svg style="left:37.2px;top:574.1700000000001px" width="8.1" height="8.1" viewBox="0 0 16 16" ><path d="M3 13 L13 3" stroke="#222" stroke-width="2.1"/><path d="M8.6 0.8 H15.2 V7.4 Z" fill="#222"/><path d="M0.8 8.6 V15.2 H7.4 Z" fill="#222"/></svg><div class="abs" style="left:56px;top:571.3700000000001px;width:13.3px;height:13.6px;background:#f0f0f0;border-radius:2.5px;"></div><svg style="left:59.1px;top:574.6700000000001px" width="7" height="7" viewBox="0 0 14 14" ><path d="M7 0.4 V13.6 M0.4 7 H13.6" stroke="#2a2a2a" stroke-width="3.1"/></svg><div class="abs" style="left:15px;top:586.57px;width:462px;height:0.9px;background:#e4e4e4;"></div></div></div><div class="abs" style="left:501px;top:36.5px;width:634px;height:551px;background:#fff;"></div><div class="t" style="top:58px;font-size:11.4px;line-height:13.68px;color:#1a1a1a;font-weight:bold;left:518.6px;transform-origin:0 50%;transform:scaleX(0.8850);">Route - Non-PO invoice 73556/23552/23</div><svg style="left:518.4px;top:87.4px" width="8.4" height="6.6" viewBox="0 0 17 13" ><path d="M0.6 12.4 H16.4 M1.5 12 V7 L5.5 5 V7 L9.5 5 V12 M11.5 12 V1 H15 V12" fill="none" stroke="#5f5f5f" stroke-width="1.35"/><path d="M3 9.5 H8" stroke="#5f5f5f" stroke-width="1.2"/></svg><div class="t" style="top:86px;font-size:7.8px;line-height:9.36px;color:#222;font-weight:bold;left:529.8px;transform-origin:0 50%;transform:scaleX(0.9150);">Ahlsell</div><div class="t" style="top:98px;font-size:6.7px;line-height:8.04px;color:#333;left:529.8px;transform-origin:0 50%;transform:scaleX(0.8949);-webkit-text-stroke:.2px #333;">cee1</div><svg style="left:587px;top:88.2px" width="8" height="5.6" viewBox="0 0 16 11" ><rect x=".7" y=".7" width="14.6" height="9.6" rx="1.2" fill="none" stroke="#555" stroke-width="1.4"/><circle cx="8" cy="5.5" r="2.1" fill="none" stroke="#555" stroke-width="1.3"/><path d="M3 3.5 V7.5 M13 3.5 V7.5" stroke="#555" stroke-width="1.1"/></svg><div class="t" style="top:86px;font-size:7.8px;line-height:9.36px;color:#222;font-weight:bold;left:598px;transform-origin:0 50%;transform:scaleX(0.9035);">102,26 SEK</div><div class="t" style="top:98px;font-size:6.4px;line-height:7.68px;color:#8a8a8a;left:599.4px;transform-origin:0 50%;transform:scaleX(0.8435);">Tax</div><div class="t" style="top:98px;font-size:6.4px;line-height:7.68px;color:#333;left:610px;transform-origin:0 50%;transform:scaleX(0.9393);-webkit-text-stroke:.2px #333;">0.00 SEK</div><svg style="left:686.4px;top:86.2px" width="6.4" height="7" viewBox="0 0 13 14" ><rect x=".8" y="2" width="11.4" height="11.2" rx="1.6" fill="none" stroke="#555" stroke-width="1.4"/><path d="M1 5.4 H12 M4 0.3 V3 M9 0.3 V3" stroke="#555" stroke-width="1.4"/></svg><div class="t" style="top:85px;font-size:7.8px;line-height:9.36px;color:#222;font-weight:bold;left:696.4px;transform-origin:0 50%;transform:scaleX(0.9735);">21/12/2023</div><div class="t" style="top:96px;font-size:6.4px;line-height:7.68px;color:#8a8a8a;left:696.6px;transform-origin:0 50%;transform:scaleX(0.7666);">Due</div><div class="t" style="top:96px;font-size:6.4px;line-height:7.68px;color:#333;left:710.4px;transform-origin:0 50%;transform:scaleX(1.0046);-webkit-text-stroke:.2px #333;">13/1/2023</div><div class="t" style="top:87px;font-size:9.2px;line-height:11.04px;color:#777;left:768.8px;transform-origin:0 50%;transform:scaleX(1.1728);">#</div><div class="t" style="top:87px;font-size:7.8px;line-height:9.36px;color:#222;font-weight:bold;left:778.4px;transform-origin:0 50%;transform:scaleX(0.9684);">73556/23552/23</div><div class="abs" style="left:518.5px;top:129.9px;width:599.5px;height:0.9px;background:#e8e8e8;"></div><div class="abs" style="left:518.5px;top:128.6px;width:36.3px;height:2px;background:#5b9fe6;"></div><div class="t" style="top:119px;font-size:8px;line-height:9.6px;color:#444;left:525.5px;transform-origin:0 50%;transform:scaleX(0.9191);">Coding</div><div class="t" style="top:119px;font-size:8px;line-height:9.6px;color:#555;left:561.3px;transform-origin:0 50%;transform:scaleX(0.9259);">Invoice image</div><div class="t" style="top:119px;font-size:8px;line-height:9.6px;color:#555;left:619.8px;transform-origin:0 50%;transform:scaleX(0.9232);">Invoice details</div><div class="t" style="top:119px;font-size:8px;line-height:9.6px;color:#444;left:680.6px;transform-origin:0 50%;transform:scaleX(0.9257);">Comments</div><div class="t" style="top:119px;font-size:8px;line-height:9.6px;color:#555;left:729.2px;transform-origin:0 50%;transform:scaleX(0.9401);">Attachments</div><div class="t" style="top:119px;font-size:8px;line-height:9.6px;color:#555;left:784.4px;transform-origin:0 50%;transform:scaleX(0.9321);">History</div><div class="t" style="top:119px;font-size:8px;line-height:9.6px;color:#555;left:821.7px;transform-origin:0 50%;transform:scaleX(0.9264);">Links</div><div class="abs" style="left:518.5px;top:139.4px;width:599.5px;height:23.6px;background:#e0f2dc;border-radius:2.5px;"></div><svg style="left:526.6px;top:147px" width="9.6" height="9.6" viewBox="0 0 9 9" ><path d="M3.7 1.5 Q4.312 4.616 7.1 5.3 Q4.312 5.984 3.7 9.1 Q3.088 5.984 0.30000000000000027 5.3 Q3.088 4.616 3.7 1.5 Z" fill="#2bb12b" stroke="#2bb12b" stroke-width=".55" stroke-linejoin="round"/><path d="M6.9 0.6000000000000001 Q7.380000000000001 1.9300000000000002 8.5 2.5 Q7.380000000000001 3.07 6.9 4.4 Q6.42 3.07 5.300000000000001 2.5 Q6.42 1.9300000000000002 6.9 0.6000000000000001 Z" fill="#fff" fill-opacity=".75" stroke="#2bb12b" stroke-width=".7" stroke-linejoin="round" stroke-dasharray="1.1 .7"/></svg><div class="t" style="top:148px;font-size:7.9px;line-height:9.48px;color:#1f1f1f;font-weight:bold;left:544.6px;transform-origin:0 50%;transform:scaleX(0.9064);">We have applied the coding for you.</div><svg style="left:1101px;top:149.4px" width="5.8" height="5.8" viewBox="0 0 10 10" ><path d="M1 1 L9 9 M9 1 L1 9" stroke="#333" stroke-width="1.7"/></svg><div class="abs" style="left:518.2px;top:174px;width:39.8px;height:18.5px;background:#fff;border:1px solid #727272;border-width:1.2px;border-radius:2.5px;"></div><svg style="left:526.6px;top:179.5px" width="6.4" height="6.4" viewBox="0 0 10 10" ><path d="M5 0 V10 M0 5 H10" stroke="#333" stroke-width="1.25"/></svg><div class="t" style="top:179px;font-size:8px;line-height:9.6px;color:#222;font-weight:bold;left:535.8px;transform-origin:0 50%;transform:scaleX(0.8489);">Add</div><div class="abs" style="left:563px;top:174px;width:45.6px;height:18.5px;background:#fff;border:1px solid #727272;border-width:1.2px;border-radius:2.5px;"></div><svg style="left:569.6px;top:179.4px" width="7.4" height="7.6" viewBox="0 0 15 15" ><rect x="1" y="4" width="9.5" height="10" rx="1.5" fill="#fff" stroke="#444" stroke-width="1.3"/><path d="M4.5 3.8 V2.5 a1.5 1.5 0 0 1 1.5 -1.5 H12.5 a1.5 1.5 0 0 1 1.5 1.5 V9.5 a1.5 1.5 0 0 1 -1.5 1.5 H10.8" fill="none" stroke="#444" stroke-width="1.3"/></svg><div class="t" style="top:179px;font-size:8px;line-height:9.6px;color:#222;font-weight:bold;left:580.7px;transform-origin:0 50%;transform:scaleX(0.8370);">Clone</div><div class="abs" style="left:613.9px;top:174px;width:53.4px;height:18.5px;background:#fff;border:1px solid #727272;border-width:1.2px;border-radius:2.5px;"></div><svg style="left:622.2px;top:179.4px" width="6.2" height="7.6" viewBox="0 0 12 15" ><rect x="1" y="1" width="10" height="13" rx="2" fill="none" stroke="#444" stroke-width="1.4"/><path d="M1 4.4 H11 M4 7.8 H8" stroke="#444" stroke-width="1.3"/></svg><div class="t" style="top:179px;font-size:8px;line-height:9.6px;color:#222;font-weight:bold;left:631.6px;transform-origin:0 50%;transform:scaleX(0.8547);">Remove</div><div class="abs" style="left:672.4px;top:174px;width:80.6px;height:18.5px;background:#fff;border:1px solid #727272;border-width:1.2px;border-radius:2.5px;"></div><div class="t" style="top:179px;font-size:8px;line-height:9.6px;color:#222;font-weight:bold;left:680.8px;transform-origin:0 50%;transform:scaleX(0.8620);">Apply latest coding</div><div class="abs" style="left:758.3px;top:174px;width:52.3px;height:18.5px;background:#fff;border:1px solid #727272;border-width:1.2px;border-radius:2.5px;"></div><div class="t" style="top:179px;font-size:8px;line-height:9.6px;color:#222;font-weight:bold;left:767px;transform-origin:0 50%;transform:scaleX(0.8724);">Templates</div><div class="abs" style="left:815.4px;top:174px;width:47.6px;height:18.5px;background:#fff;border:1px solid #727272;border-width:1.2px;border-radius:2.5px;"></div><svg style="left:822.8px;top:179px" width="7.6" height="7.6" viewBox="0 0 16 16" ><path d="M0.5 1 H15.5 L10 8 V15.5 L6 13 V8 Z" fill="#222"/></svg><div class="t" style="top:179px;font-size:8px;line-height:9.6px;color:#222;font-weight:bold;left:833.2px;transform-origin:0 50%;transform:scaleX(0.8664);">Filters</div><div class="abs" style="left:867.8px;top:174px;width:45px;height:18.5px;background:#fff;border:1px solid #727272;border-width:1.2px;border-radius:2.5px;"></div><svg style="left:895.6px;top:181.3px" width="7" height="4.2" viewBox="0 0 10 6" ><path d="M1 1 L5 5 L9 1" fill="none" stroke="#333" stroke-width="1.3"/></svg><div class="t" style="top:179px;font-size:8px;line-height:9.6px;color:#222;font-weight:bold;left:874.6px;transform-origin:0 50%;transform:scaleX(0.8685);">More</div><div class="abs" style="left:1030.7px;top:174px;width:87.2px;height:18.5px;background:#fff;border:1px solid #727272;border-width:1.2px;border-radius:2.5px;"></div><svg style="left:1038.4px;top:179.6px" width="7.4" height="7.4" viewBox="0 0 14 14" ><circle cx="7" cy="7" r="6" fill="none" stroke="#444" stroke-width="1.6"/><path d="M4.2 7.3 L6.2 9.2 L9.8 5" fill="none" stroke="#444" stroke-width="1.6"/></svg><div class="t" style="top:179px;font-size:8px;line-height:9.6px;color:#222;font-weight:bold;left:1048.8px;transform-origin:0 50%;transform:scaleX(0.8849);">Retrieve approver</div><div class="abs" style="left:518.5px;top:202px;width:484px;height:18.6px;background:#e0f2dc;border-radius:2px;"></div><div class="t" style="top:207px;font-size:7.6px;line-height:9.12px;color:#1f1f1f;font-weight:bold;left:527.7px;transform-origin:0 50%;transform:scaleX(0.9173);">Coded net:</div><div class="t" style="top:207px;font-size:7.6px;line-height:9.12px;color:#333;left:569.8px;transform-origin:0 50%;transform:scaleX(0.9255);">89,31</div><div class="t" style="top:207px;font-size:7.6px;line-height:9.12px;color:#1f1f1f;font-weight:bold;left:593.8px;transform-origin:0 50%;transform:scaleX(0.9321);">Coded tax:</div><div class="t" style="top:207px;font-size:7.6px;line-height:9.12px;color:#333;left:636.5px;transform-origin:0 50%;transform:scaleX(0.9202);">12,95</div><div class="t" style="top:207px;font-size:7.6px;line-height:9.12px;color:#1f1f1f;font-weight:bold;left:661px;transform-origin:0 50%;transform:scaleX(0.8882);">Coded gross:</div><div class="t" style="top:207px;font-size:7.6px;line-height:9.12px;color:#333;left:710.4px;transform-origin:0 50%;transform:scaleX(0.9121);">102,26</div><div class="t" style="top:207px;font-size:7.6px;line-height:9.12px;color:#1f1f1f;font-weight:bold;left:734.6px;transform-origin:0 50%;transform:scaleX(0.9236);">Coded balance (gross):</div><div class="t" style="top:207px;font-size:7.6px;line-height:9.12px;color:#333;left:820px;transform-origin:0 50%;transform:scaleX(0.8925);">0,00</div><div class="t" style="top:207px;font-size:7.7px;line-height:9.24px;color:#333;left:1011px;transform-origin:0 50%;transform:scaleX(0.9535);">Hide all auto-coded lines</div><div class="abs" style="left:1095.6px;top:205.4px;width:19.4px;height:11.8px;background:#fff;border:1px solid #bababa;border-radius:5.9px;"></div><div class="abs" style="left:1097.6px;top:207.6px;width:7.4px;height:7.4px;background:#1371cb;border-radius:3.7px;"></div><div class="abs" style="left:526.9px;top:237px;width:10.2px;height:10.2px;background:#fff;border:1px solid #8f8f8f;border-radius:1.8px;"></div><div class="t" style="top:239px;font-size:7.2px;line-height:8.64px;color:#333;font-weight:bold;font-style:italic;left:544.4px;transform-origin:0 50%;">#</div><svg style="left:553.6px;top:238.2px" width="6" height="8" viewBox="0 0 12 16" ><path d="M6 15 V2 M1 7 L6 1.6 L11 7" fill="none" stroke="#444" stroke-width="1.5"/></svg><div class="t" style="top:237px;font-size:8.8px;line-height:10.56px;color:#222;font-weight:bold;left:568.2px;transform-origin:0 50%;transform:scaleX(0.8181);">Codes</div><div class="t" style="top:238px;font-size:7.8px;line-height:9.36px;color:#222;font-weight:bold;left:839px;transform-origin:0 50%;transform:scaleX(0.9707);">Net</div><div class="t" style="top:238px;font-size:7.8px;line-height:9.36px;color:#222;font-weight:bold;left:890.6px;transform-origin:0 50%;transform:scaleX(0.9267);">Tax group</div><div class="t" style="top:238px;font-size:7.8px;line-height:9.36px;color:#222;font-weight:bold;left:953.2px;transform-origin:0 50%;transform:scaleX(0.9229);">Approver</div><svg style="left:1109px;top:238.4px" width="8.2" height="8.2" viewBox="0 0 16 16" ><circle cx="8" cy="8" r="6.8" fill="none" stroke="#555" stroke-width="1.4"/><path d="M8 4 V8.3 H11.5" fill="none" stroke="#555" stroke-width="1.3"/></svg><div class="abs" style="left:518.5px;top:253.4px;width:599.5px;height:1.1px;background:#b2b2b2;"></div><div class="abs" style="left:526.9px;top:273.90000000000003px;width:10.2px;height:10.2px;background:#fff;border:1px solid #8f8f8f;border-radius:1.8px;"></div><div class="t" style="top:275px;font-size:7.6px;line-height:9.12px;color:#333;left:545.6px;transform-origin:0 50%;">1</div><div class="abs" style="left:559.4px;top:259.1px;width:39.8px;height:18.8px;background:#fff;border:1px solid #c2c2c2;border-radius:1px;"></div><div class="t" style="top:265px;font-size:8.1px;line-height:9.72px;color:#333;left:563.8px;transform-origin:0 50%;transform:scaleX(0.8569);">73580</div><svg style="left:587.4px;top:265.1px" width="7.4" height="7.4" viewBox="0 0 14 14" ><circle cx="7" cy="7" r="7" fill="#2bb12b"/><path d="M3.8 7.3 L6 9.4 L10.2 4.9" fill="none" stroke="#fff" stroke-width="1.7"/></svg><div class="abs" style="left:602.2px;top:259.1px;width:54.9px;height:18.8px;background:#fff;border:1px solid #c2c2c2;border-radius:1px;"></div><div class="t" style="top:265px;font-size:8.1px;line-height:9.72px;color:#333;left:606.8px;transform-origin:0 50%;transform:scaleX(0.8464);">18720090</div><svg style="left:644.5999999999999px;top:265.1px" width="7.4" height="7.4" viewBox="0 0 14 14" ><circle cx="7" cy="7" r="7" fill="#2bb12b"/><path d="M3.8 7.3 L6 9.4 L10.2 4.9" fill="none" stroke="#fff" stroke-width="1.7"/></svg><div class="abs" style="left:658.9px;top:259.1px;width:54.3px;height:18.8px;background:#eeeeee;border:1px solid #c8c8c8;border-radius:1px;"></div><div class="t" style="top:265px;font-size:8.1px;line-height:9.72px;color:#333;left:663.8px;transform-origin:0 50%;transform:scaleX(0.8727);">1124</div><div class="abs" style="left:716.2px;top:259.1px;width:112.6px;height:18.8px;background:#fff;border:1px solid #c2c2c2;border-radius:1px;"></div><div class="t" style="top:265px;font-size:8.1px;line-height:9.72px;color:#333;left:720.3px;transform-origin:0 50%;transform:scaleX(0.8947);">kartona glāzes, vaki-Hestio</div><svg style="left:815.9px;top:264.70000000000005px" width="8.2" height="8.2" viewBox="0 0 14 14" ><circle cx="7" cy="7" r="6" fill="none" stroke="#f0954a" stroke-width="1.9"/><path d="M4.2 7.3 L6.2 9.2 L9.8 5" fill="none" stroke="#f0954a" stroke-width="1.9"/></svg><div class="abs" style="left:559.4px;top:280.3px;width:97.7px;height:18.8px;background:#fff;border:1px solid #c2c2c2;border-radius:1px;"></div><div class="t" style="top:286px;font-size:7.8px;line-height:9.36px;color:#b0b0b0;font-style:italic;left:563.8px;transform-origin:0 50%;transform:scaleX(0.8563);">RegNr</div><div class="abs" style="left:658.9px;top:280.3px;width:54.3px;height:18.8px;background:#fff;border:1px solid #c2c2c2;border-radius:1px;"></div><div class="t" style="top:286px;font-size:7.8px;line-height:9.36px;color:#b0b0b0;font-style:italic;left:663.8px;transform-origin:0 50%;transform:scaleX(0.7598);">GGN</div><div class="abs" style="left:716.2px;top:280.3px;width:112.6px;height:18.8px;background:#fff;border:1px solid #c2c2c2;border-radius:1px;"></div><div class="t" style="top:286px;font-size:7.8px;line-height:9.36px;color:#b0b0b0;font-style:italic;left:720.3px;transform-origin:0 50%;transform:scaleX(0.8343);">OrdreNr</div><div class="abs" style="left:837.4px;top:269.5px;width:42.8px;height:19.2px;background:#fff;border:1px solid #c2c2c2;border-radius:1px;"></div><div class="t" style="top:275px;font-size:8.1px;line-height:9.72px;color:#333;left:857.73px;transform-origin:100% 50%;transform:scaleX(0.8190);">38,12</div><div class="abs" style="left:889.4px;top:269.5px;width:54.8px;height:19.2px;background:#fff;border:1px solid #c2c2c2;border-radius:1px;"></div><div class="t" style="top:275px;font-size:8.1px;line-height:9.72px;color:#333;left:908.10px;transform-origin:50% 50%;transform:scaleX(0.8436);">61</div><svg style="left:931.8px;top:275.1px" width="8.2" height="8.2" viewBox="0 0 14 14" ><circle cx="7" cy="7" r="6" fill="none" stroke="#f0954a" stroke-width="1.9"/><path d="M4.2 7.3 L6.2 9.2 L9.8 5" fill="none" stroke="#f0954a" stroke-width="1.9"/></svg><div class="abs" style="left:954.3px;top:269.5px;width:117.8px;height:19.2px;background:#fff;border:1px solid #c2c2c2;border-radius:1px;"></div><div class="t" style="top:275px;font-size:8.1px;line-height:9.72px;color:#333;left:958.6px;transform-origin:0 50%;transform:scaleX(0.8395);">Raivis Zebergs (BGSD46)</div><svg style="left:1059.6px;top:275.1px" width="8.2" height="8.2" viewBox="0 0 14 14" ><circle cx="7" cy="7" r="6" fill="none" stroke="#f0954a" stroke-width="1.9"/><path d="M4.2 7.3 L6.2 9.2 L9.8 5" fill="none" stroke="#f0954a" stroke-width="1.9"/></svg><div class="abs" style="left:1081.2px;top:272.1px;width:12.8px;height:14.2px;background:#fff;border:1px solid #8ab8e6;border-radius:1.2px;"></div><svg style="left:1084.4px;top:276.0px" width="6.4" height="6.4" viewBox="0 0 10 10" ><path d="M1 1 L9 9 M9 1 L1 9" stroke="#1371cb" stroke-width="1.2"/></svg><div class="abs" style="left:1097.2px;top:272.1px;width:13.2px;height:14.2px;background:#1371cb;border-radius:1.8px;"></div><svg style="left:1100.2px;top:276.5px" width="7.2" height="5.760000000000001" viewBox="0 0 10 8" ><path d="M1 4.2 L3.8 7 L9 1" fill="none" stroke="#fff" stroke-width="1.1"/></svg><div class="abs" style="left:518.5px;top:303.3px;width:599.5px;height:0.9px;background:#f0f0f0;"></div><div class="abs" style="left:526.9px;top:323.7px;width:10.2px;height:10.2px;background:#fff;border:1px solid #8f8f8f;border-radius:1.8px;"></div><div class="t" style="top:325px;font-size:7.6px;line-height:9.12px;color:#333;left:545.6px;transform-origin:0 50%;">2</div><div class="abs" style="left:559.4px;top:308.9px;width:39.8px;height:18.8px;background:#fff;border:1px solid #c2c2c2;border-radius:1px;"></div><div class="t" style="top:314px;font-size:8.1px;line-height:9.72px;color:#333;left:563.8px;transform-origin:0 50%;transform:scaleX(0.8569);">73580</div><svg style="left:587.4px;top:314.9px" width="7.4" height="7.4" viewBox="0 0 14 14" ><circle cx="7" cy="7" r="7" fill="#2bb12b"/><path d="M3.8 7.3 L6 9.4 L10.2 4.9" fill="none" stroke="#fff" stroke-width="1.7"/></svg><div class="abs" style="left:602.2px;top:308.9px;width:54.9px;height:18.8px;background:#fff;border:1px solid #c2c2c2;border-radius:1px;"></div><div class="t" style="top:314px;font-size:8.1px;line-height:9.72px;color:#333;left:606.8px;transform-origin:0 50%;transform:scaleX(0.8464);">18720090</div><svg style="left:644.5999999999999px;top:314.9px" width="7.4" height="7.4" viewBox="0 0 14 14" ><circle cx="7" cy="7" r="7" fill="#2bb12b"/><path d="M3.8 7.3 L6 9.4 L10.2 4.9" fill="none" stroke="#fff" stroke-width="1.7"/></svg><div class="abs" style="left:658.9px;top:308.9px;width:54.3px;height:18.8px;background:#fff;border:1px solid #c2c2c2;border-radius:1px;"></div><div class="t" style="top:314px;font-size:7.8px;line-height:9.36px;color:#b0b0b0;font-style:italic;left:663.8px;transform-origin:0 50%;transform:scaleX(0.9019);">ProfitC</div><div class="abs" style="left:716.2px;top:308.9px;width:112.6px;height:18.8px;background:#fff;border:1px solid #c2c2c2;border-radius:1px;"></div><div class="t" style="top:314px;font-size:8.1px;line-height:9.72px;color:#333;left:720.3px;transform-origin:0 50%;transform:scaleX(0.8947);">kartona glāzes, vaki-Hestio</div><svg style="left:815.9px;top:314.5px" width="8.2" height="8.2" viewBox="0 0 14 14" ><circle cx="7" cy="7" r="6" fill="none" stroke="#f0954a" stroke-width="1.9"/><path d="M4.2 7.3 L6.2 9.2 L9.8 5" fill="none" stroke="#f0954a" stroke-width="1.9"/></svg><div class="abs" style="left:559.4px;top:330.09999999999997px;width:97.7px;height:18.8px;background:#fff;border:1px solid #c2c2c2;border-radius:1px;"></div><div class="t" style="top:336px;font-size:7.8px;line-height:9.36px;color:#b0b0b0;font-style:italic;left:563.8px;transform-origin:0 50%;transform:scaleX(0.8563);">RegNr</div><div class="abs" style="left:658.9px;top:330.09999999999997px;width:54.3px;height:18.8px;background:#fff;border:1px solid #c2c2c2;border-radius:1px;"></div><div class="t" style="top:336px;font-size:7.8px;line-height:9.36px;color:#b0b0b0;font-style:italic;left:663.8px;transform-origin:0 50%;transform:scaleX(0.7598);">GGN</div><div class="abs" style="left:716.2px;top:330.09999999999997px;width:112.6px;height:18.8px;background:#fff;border:1px solid #c2c2c2;border-radius:1px;"></div><div class="t" style="top:336px;font-size:7.8px;line-height:9.36px;color:#b0b0b0;font-style:italic;left:720.3px;transform-origin:0 50%;transform:scaleX(0.8343);">OrdreNr</div><div class="abs" style="left:837.4px;top:319.29999999999995px;width:42.8px;height:19.2px;background:#fff;border:1px solid #c2c2c2;border-radius:1px;"></div><div class="t" style="top:325px;font-size:8.1px;line-height:9.72px;color:#333;left:862.24px;transform-origin:100% 50%;transform:scaleX(1.0531);">4,80</div><div class="abs" style="left:889.4px;top:319.29999999999995px;width:54.8px;height:19.2px;background:#fff;border:1px solid #c2c2c2;border-radius:1px;"></div><div class="t" style="top:325px;font-size:8.1px;line-height:9.72px;color:#333;left:908.10px;transform-origin:50% 50%;transform:scaleX(0.8436);">00</div><svg style="left:931.8px;top:324.9px" width="8.2" height="8.2" viewBox="0 0 14 14" ><circle cx="7" cy="7" r="6" fill="none" stroke="#f0954a" stroke-width="1.9"/><path d="M4.2 7.3 L6.2 9.2 L9.8 5" fill="none" stroke="#f0954a" stroke-width="1.9"/></svg><div class="abs" style="left:954.3px;top:319.29999999999995px;width:117.8px;height:19.2px;background:#fff;border:1px solid #c2c2c2;border-radius:1px;"></div><div class="t" style="top:325px;font-size:8.1px;line-height:9.72px;color:#333;left:958.6px;transform-origin:0 50%;transform:scaleX(0.8395);">Raivis Zebergs (BGSD46)</div><svg style="left:1059.6px;top:324.9px" width="8.2" height="8.2" viewBox="0 0 14 14" ><circle cx="7" cy="7" r="6" fill="none" stroke="#f0954a" stroke-width="1.9"/><path d="M4.2 7.3 L6.2 9.2 L9.8 5" fill="none" stroke="#f0954a" stroke-width="1.9"/></svg><div class="abs" style="left:1081.2px;top:321.9px;width:12.8px;height:14.2px;background:#fff;border:1px solid #8ab8e6;border-radius:1.2px;"></div><svg style="left:1084.4px;top:325.79999999999995px" width="6.4" height="6.4" viewBox="0 0 10 10" ><path d="M1 1 L9 9 M9 1 L1 9" stroke="#1371cb" stroke-width="1.2"/></svg><div class="abs" style="left:1097.2px;top:321.9px;width:13.2px;height:14.2px;background:#1371cb;border-radius:1.8px;"></div><svg style="left:1100.2px;top:326.29999999999995px" width="7.2" height="5.760000000000001" viewBox="0 0 10 8" ><path d="M1 4.2 L3.8 7 L9 1" fill="none" stroke="#fff" stroke-width="1.1"/></svg><div class="abs" style="left:518.5px;top:353.09999999999997px;width:599.5px;height:0.9px;background:#f0f0f0;"></div><div class="abs" style="left:526.9px;top:373.6px;width:10.2px;height:10.2px;background:#fff;border:1px solid #8f8f8f;border-radius:1.8px;"></div><div class="t" style="top:375px;font-size:7.6px;line-height:9.12px;color:#333;left:545.6px;transform-origin:0 50%;">3</div><div class="abs" style="left:559.4px;top:358.8px;width:39.8px;height:18.8px;background:#fff;border:1px solid #c2c2c2;border-radius:1px;"></div><div class="t" style="top:364px;font-size:8.1px;line-height:9.72px;color:#333;left:563.8px;transform-origin:0 50%;transform:scaleX(0.8569);">68010</div><svg style="left:587.4px;top:364.8px" width="7.4" height="7.4" viewBox="0 0 14 14" ><circle cx="7" cy="7" r="7" fill="#2bb12b"/><path d="M3.8 7.3 L6 9.4 L10.2 4.9" fill="none" stroke="#fff" stroke-width="1.7"/></svg><div class="abs" style="left:602.2px;top:358.8px;width:54.9px;height:18.8px;background:#fff;border:1px solid #c2c2c2;border-radius:1px;"></div><div class="t" style="top:364px;font-size:8.1px;line-height:9.72px;color:#333;left:606.8px;transform-origin:0 50%;transform:scaleX(0.8464);">18720090</div><svg style="left:644.5999999999999px;top:364.8px" width="7.4" height="7.4" viewBox="0 0 14 14" ><circle cx="7" cy="7" r="7" fill="#2bb12b"/><path d="M3.8 7.3 L6 9.4 L10.2 4.9" fill="none" stroke="#fff" stroke-width="1.7"/></svg><div class="abs" style="left:658.9px;top:358.8px;width:54.3px;height:18.8px;background:#fff;border:1px solid #c2c2c2;border-radius:1px;"></div><div class="t" style="top:364px;font-size:8.1px;line-height:9.72px;color:#333;left:663.8px;transform-origin:0 50%;transform:scaleX(0.8436);">36236</div><svg style="left:701.5999999999999px;top:364.8px" width="7.4" height="7.4" viewBox="0 0 14 14" ><circle cx="7" cy="7" r="7" fill="#2bb12b"/><path d="M3.8 7.3 L6 9.4 L10.2 4.9" fill="none" stroke="#fff" stroke-width="1.7"/></svg><div class="abs" style="left:716.2px;top:358.8px;width:112.6px;height:18.8px;background:#fff;border:1px solid #c2c2c2;border-radius:1px;"></div><div class="t" style="top:364px;font-size:8.1px;line-height:9.72px;color:#333;left:720.3px;transform-origin:0 50%;transform:scaleX(0.8952);">papirs-Hestio AS</div><svg style="left:815.9px;top:364.40000000000003px" width="8.2" height="8.2" viewBox="0 0 14 14" ><circle cx="7" cy="7" r="6" fill="none" stroke="#f0954a" stroke-width="1.9"/><path d="M4.2 7.3 L6.2 9.2 L9.8 5" fill="none" stroke="#f0954a" stroke-width="1.9"/></svg><div class="abs" style="left:559.4px;top:380.0px;width:97.7px;height:18.8px;background:#fff;border:1px solid #c2c2c2;border-radius:1px;"></div><div class="t" style="top:386px;font-size:7.8px;line-height:9.36px;color:#b0b0b0;font-style:italic;left:563.8px;transform-origin:0 50%;transform:scaleX(0.8563);">RegNr</div><div class="abs" style="left:658.9px;top:380.0px;width:54.3px;height:18.8px;background:#fff;border:1px solid #c2c2c2;border-radius:1px;"></div><div class="t" style="top:386px;font-size:7.8px;line-height:9.36px;color:#b0b0b0;font-style:italic;left:663.8px;transform-origin:0 50%;transform:scaleX(0.7598);">GGN</div><div class="abs" style="left:716.2px;top:380.0px;width:112.6px;height:18.8px;background:#fff;border:1px solid #c2c2c2;border-radius:1px;"></div><div class="t" style="top:386px;font-size:7.8px;line-height:9.36px;color:#b0b0b0;font-style:italic;left:720.3px;transform-origin:0 50%;transform:scaleX(0.8343);">OrdreNr</div><div class="abs" style="left:837.4px;top:369.2px;width:42.8px;height:19.2px;background:#fff;border:1px solid #c2c2c2;border-radius:1px;"></div><div class="t" style="top:375px;font-size:8.1px;line-height:9.72px;color:#333;left:857.73px;transform-origin:100% 50%;transform:scaleX(0.8190);">40,50</div><div class="abs" style="left:889.4px;top:369.2px;width:54.8px;height:19.2px;background:#fff;border:1px solid #c2c2c2;border-radius:1px;"></div><div class="t" style="top:375px;font-size:8.1px;line-height:9.72px;color:#333;left:908.10px;transform-origin:50% 50%;transform:scaleX(0.8436);">63</div><svg style="left:931.8px;top:374.8px" width="8.2" height="8.2" viewBox="0 0 14 14" ><circle cx="7" cy="7" r="6" fill="none" stroke="#f0954a" stroke-width="1.9"/><path d="M4.2 7.3 L6.2 9.2 L9.8 5" fill="none" stroke="#f0954a" stroke-width="1.9"/></svg><div class="abs" style="left:954.3px;top:369.2px;width:117.8px;height:19.2px;background:#fff;border:1px solid #c2c2c2;border-radius:1px;"></div><div class="t" style="top:375px;font-size:8.1px;line-height:9.72px;color:#333;left:958.6px;transform-origin:0 50%;transform:scaleX(0.8395);">Raivis Zebergs (BGSD46)</div><svg style="left:1059.6px;top:374.8px" width="8.2" height="8.2" viewBox="0 0 14 14" ><circle cx="7" cy="7" r="6" fill="none" stroke="#f0954a" stroke-width="1.9"/><path d="M4.2 7.3 L6.2 9.2 L9.8 5" fill="none" stroke="#f0954a" stroke-width="1.9"/></svg><div class="abs" style="left:1081.2px;top:371.8px;width:12.8px;height:14.2px;background:#fff;border:1px solid #8ab8e6;border-radius:1.2px;"></div><svg style="left:1084.4px;top:375.7px" width="6.4" height="6.4" viewBox="0 0 10 10" ><path d="M1 1 L9 9 M9 1 L1 9" stroke="#1371cb" stroke-width="1.2"/></svg><div class="abs" style="left:1097.2px;top:371.8px;width:13.2px;height:14.2px;background:#1371cb;border-radius:1.8px;"></div><svg style="left:1100.2px;top:376.2px" width="7.2" height="5.760000000000001" viewBox="0 0 10 8" ><path d="M1 4.2 L3.8 7 L9 1" fill="none" stroke="#fff" stroke-width="1.1"/></svg><div class="abs" style="left:518.5px;top:403.0px;width:599.5px;height:0.9px;background:#f0f0f0;"></div><div class="abs" style="left:526.9px;top:423.5px;width:10.2px;height:10.2px;background:#fff;border:1px solid #8f8f8f;border-radius:1.8px;"></div><div class="t" style="top:424px;font-size:7.6px;line-height:9.12px;color:#333;left:545.6px;transform-origin:0 50%;">4</div><div class="abs" style="left:559.4px;top:408.7px;width:39.8px;height:18.8px;background:#fff;border:1px solid #c2c2c2;border-radius:1px;"></div><div class="t" style="top:414px;font-size:8.1px;line-height:9.72px;color:#333;left:563.8px;transform-origin:0 50%;transform:scaleX(0.8569);">68010</div><svg style="left:587.4px;top:414.7px" width="7.4" height="7.4" viewBox="0 0 14 14" ><circle cx="7" cy="7" r="7" fill="#2bb12b"/><path d="M3.8 7.3 L6 9.4 L10.2 4.9" fill="none" stroke="#fff" stroke-width="1.7"/></svg><div class="abs" style="left:602.2px;top:408.7px;width:54.9px;height:18.8px;background:#fff;border:1px solid #c2c2c2;border-radius:1px;"></div><div class="t" style="top:414px;font-size:8.1px;line-height:9.72px;color:#333;left:606.8px;transform-origin:0 50%;transform:scaleX(0.8464);">18720090</div><svg style="left:644.5999999999999px;top:414.7px" width="7.4" height="7.4" viewBox="0 0 14 14" ><circle cx="7" cy="7" r="7" fill="#2bb12b"/><path d="M3.8 7.3 L6 9.4 L10.2 4.9" fill="none" stroke="#fff" stroke-width="1.7"/></svg><div class="abs" style="left:658.9px;top:408.7px;width:54.3px;height:18.8px;background:#fff;border:1px solid #c2c2c2;border-radius:1px;"></div><div class="t" style="top:414px;font-size:7.8px;line-height:9.36px;color:#b0b0b0;font-style:italic;left:663.8px;transform-origin:0 50%;transform:scaleX(0.9019);">ProfitC</div><div class="abs" style="left:716px;top:408.5px;width:113px;height:19.2px;background:#fff;border:1px solid #7fb0e8;border-radius:1.5px;box-shadow:0 0 7px 2px rgba(80,150,235,.38);"></div><div class="t" style="top:414px;font-size:8.1px;line-height:9.72px;color:#333;left:720.3px;transform-origin:0 50%;transform:scaleX(0.8965);">plastmasas glāzes (udenim)</div><svg style="left:815.9px;top:414.3px" width="8.2" height="8.2" viewBox="0 0 14 14" ><circle cx="7" cy="7" r="6" fill="none" stroke="#f0954a" stroke-width="1.9"/><path d="M4.2 7.3 L6.2 9.2 L9.8 5" fill="none" stroke="#f0954a" stroke-width="1.9"/></svg><div class="abs" style="left:559.4px;top:429.9px;width:97.7px;height:18.8px;background:#fff;border:1px solid #c2c2c2;border-radius:1px;"></div><div class="t" style="top:435px;font-size:7.8px;line-height:9.36px;color:#b0b0b0;font-style:italic;left:563.8px;transform-origin:0 50%;transform:scaleX(0.8563);">RegNr</div><div class="abs" style="left:658.9px;top:429.9px;width:54.3px;height:18.8px;background:#fff;border:1px solid #c2c2c2;border-radius:1px;"></div><div class="t" style="top:435px;font-size:7.8px;line-height:9.36px;color:#b0b0b0;font-style:italic;left:663.8px;transform-origin:0 50%;transform:scaleX(0.7598);">GGN</div><div class="abs" style="left:716.2px;top:429.9px;width:112.6px;height:18.8px;background:#fff;border:1px solid #c2c2c2;border-radius:1px;"></div><div class="t" style="top:435px;font-size:7.8px;line-height:9.36px;color:#b0b0b0;font-style:italic;left:720.3px;transform-origin:0 50%;transform:scaleX(0.8343);">OrdreNr</div><div class="abs" style="left:837.4px;top:419.09999999999997px;width:42.8px;height:19.2px;background:#fff;border:1px solid #c2c2c2;border-radius:1px;"></div><div class="t" style="top:425px;font-size:8.1px;line-height:9.72px;color:#333;left:857.73px;transform-origin:100% 50%;transform:scaleX(0.8190);">40,50</div><div class="abs" style="left:889.4px;top:419.09999999999997px;width:54.8px;height:19.2px;background:#fff;border:1px solid #c2c2c2;border-radius:1px;"></div><div class="t" style="top:425px;font-size:8.1px;line-height:9.72px;color:#333;left:908.10px;transform-origin:50% 50%;transform:scaleX(0.8436);">63</div><svg style="left:931.8px;top:424.7px" width="8.2" height="8.2" viewBox="0 0 14 14" ><circle cx="7" cy="7" r="6" fill="none" stroke="#f0954a" stroke-width="1.9"/><path d="M4.2 7.3 L6.2 9.2 L9.8 5" fill="none" stroke="#f0954a" stroke-width="1.9"/></svg><div class="abs" style="left:954.3px;top:419.09999999999997px;width:117.8px;height:19.2px;background:#fff;border:1px solid #c2c2c2;border-radius:1px;"></div><div class="t" style="top:425px;font-size:8.1px;line-height:9.72px;color:#333;left:958.6px;transform-origin:0 50%;transform:scaleX(0.8395);">Raivis Zebergs (BGSD46)</div><svg style="left:1059.6px;top:424.7px" width="8.2" height="8.2" viewBox="0 0 14 14" ><circle cx="7" cy="7" r="6" fill="none" stroke="#f0954a" stroke-width="1.9"/><path d="M4.2 7.3 L6.2 9.2 L9.8 5" fill="none" stroke="#f0954a" stroke-width="1.9"/></svg><div class="abs" style="left:1081.2px;top:421.7px;width:12.8px;height:14.2px;background:#fff;border:1px solid #8ab8e6;border-radius:1.2px;"></div><svg style="left:1084.4px;top:425.59999999999997px" width="6.4" height="6.4" viewBox="0 0 10 10" ><path d="M1 1 L9 9 M9 1 L1 9" stroke="#1371cb" stroke-width="1.2"/></svg><div class="abs" style="left:1097.2px;top:421.7px;width:13.2px;height:14.2px;background:#1371cb;border-radius:1.8px;"></div><svg style="left:1100.2px;top:426.09999999999997px" width="7.2" height="5.760000000000001" viewBox="0 0 10 8" ><path d="M1 4.2 L3.8 7 L9 1" fill="none" stroke="#fff" stroke-width="1.1"/></svg><div class="abs" style="left:518.5px;top:452.9px;width:599.5px;height:0.9px;background:#f0f0f0;"></div><div class="abs" style="left:601px;top:235.4px;width:55.8px;height:21.2px;background:#2e2e2e;border-radius:2.5px;"></div><div class="t" style="top:240px;font-size:5.9px;line-height:7.08px;color:#fff;font-weight:bold;left:611.46px;transform-origin:50% 50%;transform:scaleX(0.8552);">Dimension 2</div><div class="t" style="top:248px;font-size:5.9px;line-height:7.08px;color:#f0f0f0;left:607.35px;transform-origin:50% 50%;transform:scaleX(0.8777);">Confidence 90%</div><div class="abs" style="left:518.5px;top:453.8px;width:599.5px;height:31.6px;background:#fcfcfc;"></div><div class="t" style="top:466px;font-size:7.6px;line-height:9.12px;color:#333;left:527.6px;transform-origin:0 50%;transform:scaleX(0.9421);">1-4 of 4 lines, 0 selected.</div><div class="abs" style="left:898.6px;top:556.8px;width:34.6px;height:18.8px;background:#fff;border:1px solid #8ab8e6;border-radius:2px;"></div><div class="t" style="top:562px;font-size:7.8px;line-height:9.36px;color:#1371cb;font-weight:bold;left:907.4px;transform-origin:0 50%;transform:scaleX(0.9333);">Save</div><div class="abs" style="left:937.6px;top:556.8px;width:70px;height:18.8px;background:#fff;border:1px solid #8ab8e6;border-radius:2px;"></div><div class="t" style="top:562px;font-size:7.8px;line-height:9.36px;color:#1371cb;font-weight:bold;left:946.6px;transform-origin:0 50%;transform:scaleX(0.8953);">Send for review</div><div class="abs" style="left:1012px;top:556.8px;width:67.6px;height:18.8px;background:#fff;border:1px solid #8ab8e6;border-radius:2px;"></div><div class="t" style="top:562px;font-size:7.8px;line-height:9.36px;color:#1371cb;font-weight:bold;left:1020.8px;transform-origin:0 50%;transform:scaleX(0.9048);">Control Center</div><div class="abs" style="left:1084px;top:556.8px;width:35.2px;height:18.8px;background:#1371cb;border-radius:2px;"></div><div class="t" style="top:562px;font-size:7.8px;line-height:9.36px;color:#fff;font-weight:bold;left:1092.07px;transform-origin:50% 50%;transform:scaleX(0.9020);">Send</div></div></div></body></html>
